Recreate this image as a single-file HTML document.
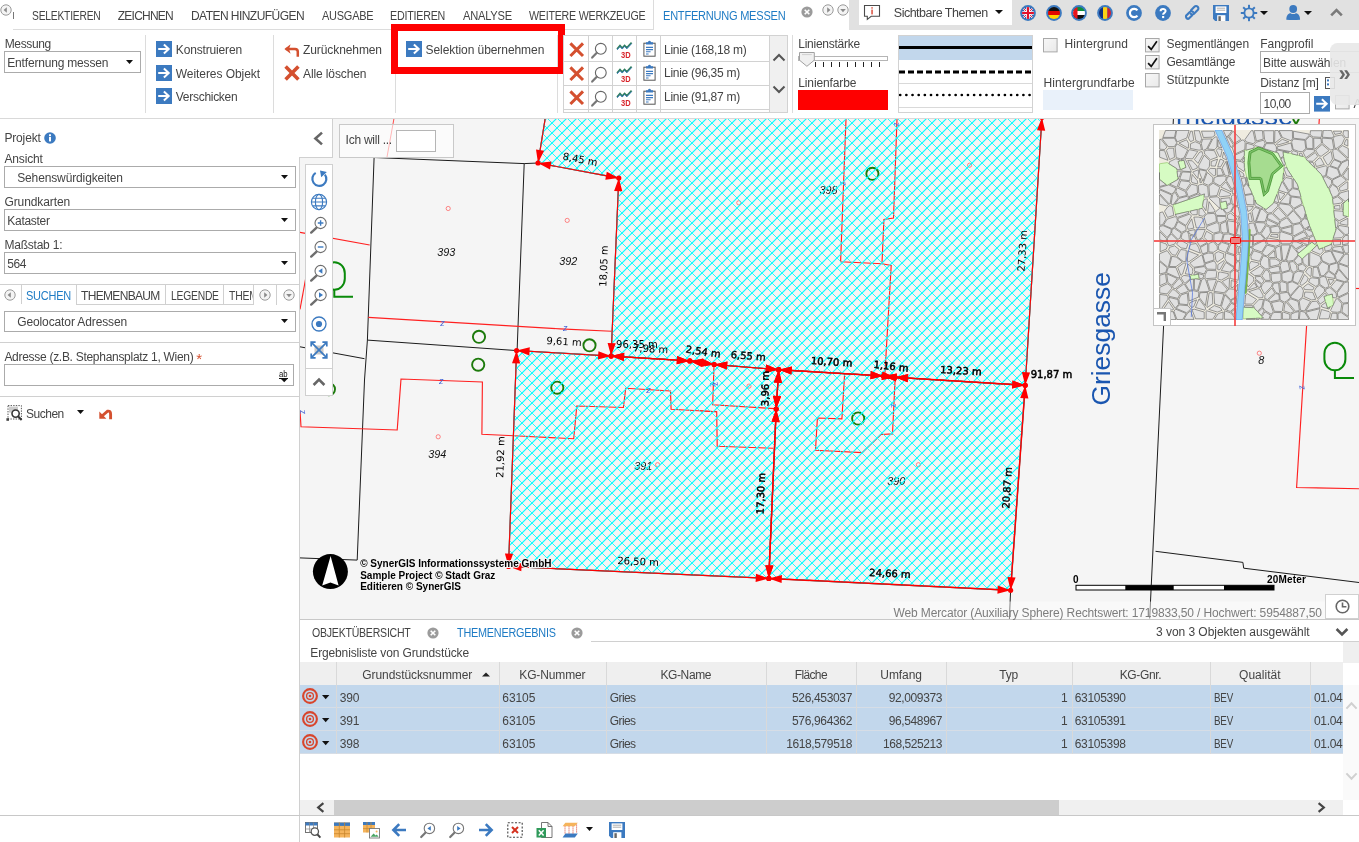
<!DOCTYPE html>
<html lang="de"><head><meta charset="utf-8"><title>WebOffice - Entfernung messen</title><style>
html,body{margin:0;padding:0;}
body{width:1359px;height:842px;overflow:hidden;background:#fff;position:relative;font-family:"Liberation Sans",sans-serif;}
.a{position:absolute;box-sizing:border-box;}
.t{white-space:nowrap;}
#root{position:absolute;left:0;top:0;width:1359px;height:842px;will-change:transform;}
svg{overflow:visible;}
</style></head><body><div id="root">
<div class="a" style="left:849px;top:0px;width:510px;height:30px;background:#e1e1e1;"></div>
<div class="a" style="left:859px;top:0px;width:153px;height:25px;background:#fff;"></div>
<div class="a" style="left:13px;top:29px;width:836px;height:1px;background:#dcdcdc;"></div>
<div class="a" style="left:653px;top:0px;width:1px;height:30px;background:#dcdcdc;"></div>
<div class="a" style="left:654px;top:29px;width:195px;height:1px;background:#fff;"></div>
<svg class="a" style="left:0.2999999999999998px;top:4.199999999999999px;" width="12" height="12" viewBox="0 0 12 12"><circle cx="6" cy="6" r="5.2" fill="#f4f4f4" stroke="#9a9a9a" stroke-width="1"/><path d="M6.8 3.2V8.8L3.6 6Z" fill="#8a8a8a"/></svg>
<div class="a" style="left:13px;top:12px;width:1px;height:7px;background:#777;"></div>
<span id="t0" class="a t" style="left:31.8px;top:6.34px;font:400 12px/20px 'Liberation Sans', sans-serif;color:#444;letter-spacing:-0.250px;transform:scaleX(0.8567);transform-origin:0 50%;">SELEKTIEREN</span>
<span id="t1" class="a t" style="left:117.8px;top:6.34px;font:400 12px/20px 'Liberation Sans', sans-serif;color:#444;letter-spacing:-0.779px;">ZEICHNEN</span>
<span id="t2" class="a t" style="left:191px;top:6.34px;font:400 12px/20px 'Liberation Sans', sans-serif;color:#444;letter-spacing:-0.547px;">DATEN HINZUFÜGEN</span>
<span id="t3" class="a t" style="left:321.5px;top:6.34px;font:400 12px/20px 'Liberation Sans', sans-serif;color:#444;letter-spacing:-0.250px;transform:scaleX(0.9130);transform-origin:0 50%;">AUSGABE</span>
<span id="t4" class="a t" style="left:390.3px;top:6.34px;font:400 12px/20px 'Liberation Sans', sans-serif;color:#444;letter-spacing:-0.250px;transform:scaleX(0.8919);transform-origin:0 50%;">EDITIEREN</span>
<span id="t5" class="a t" style="left:462.5px;top:6.34px;font:400 12px/20px 'Liberation Sans', sans-serif;color:#444;letter-spacing:-0.250px;transform:scaleX(0.9273);transform-origin:0 50%;">ANALYSE</span>
<span id="t6" class="a t" style="left:528.5px;top:6.34px;font:400 12px/20px 'Liberation Sans', sans-serif;color:#444;letter-spacing:-0.250px;transform:scaleX(0.8878);transform-origin:0 50%;">WEITERE WERKZEUGE</span>
<span id="t7" class="a t" style="left:663px;top:6.34px;font:400 12px/20px 'Liberation Sans', sans-serif;color:#1e7bc4;letter-spacing:-0.250px;transform:scaleX(0.9195);transform-origin:0 50%;">ENTFERNUNG MESSEN</span>
<svg class="a" style="left:800.8px;top:6px;" width="12" height="12" viewBox="0 0 12 12"><circle cx="6" cy="6" r="5.6" fill="#9b9b9b"/><path d="M3.7 3.7L8.3 8.3M8.3 3.7L3.7 8.3" stroke="#fff" stroke-width="1.6"/></svg>
<svg class="a" style="left:821.8px;top:4.199999999999999px;" width="12" height="12" viewBox="0 0 12 12"><circle cx="6" cy="6" r="5.2" fill="#f4f4f4" stroke="#9a9a9a" stroke-width="1"/><path d="M5.2 3.2V8.8L8.4 6Z" fill="#8a8a8a"/></svg>
<svg class="a" style="left:836.8px;top:4.199999999999999px;" width="12" height="12" viewBox="0 0 12 12"><circle cx="6" cy="6" r="5.2" fill="#f4f4f4" stroke="#9a9a9a" stroke-width="1"/><path d="M3.2 5H8.8L6 8.2Z" fill="#8a8a8a"/></svg>
<svg class="a" style="left:863px;top:4px;" width="18" height="17" viewBox="0 0 18 17"><path d="M1.5 1.5H16.5V12.3H8.2L4.3 15.4V12.3H1.5Z" fill="#fff" stroke="#4a4a4a" stroke-width="1.1"/><rect x="8.4" y="3.2" width="1.3" height="1.4" fill="#d4321f"/><rect x="8.4" y="5.6" width="1.3" height="4.8" fill="#d4321f"/></svg>
<span id="t8" class="a t" style="left:893.8px;top:2.87px;font:400 12.5px/20px 'Liberation Sans', sans-serif;color:#444;letter-spacing:-0.498px;">Sichtbare Themen</span>
<svg class="a" style="left:995.3px;top:10.0px;" width="8" height="4" viewBox="0 0 8 4"><path d="M0 0H8L4.0 4Z" fill="#111"/></svg>
<svg class="a" style="left:1019.9000000000001px;top:4.800000000000001px;" width="16" height="16" viewBox="0 0 16 16"><defs><clipPath id="fc1027"><circle cx="8" cy="8" r="6"/></clipPath></defs><circle cx="8" cy="8" r="7.9" fill="#3c7ac0"/><g clip-path="url(#fc1027)"><rect width="16" height="16" fill="#2a3f8f"/><path d="M0 0L16 16M16 0L0 16" stroke="#fff" stroke-width="2.2"/><path d="M0 0L16 16M16 0L0 16" stroke="#e3122c" stroke-width="0.9"/><path d="M8 0V16M0 8H16" stroke="#fff" stroke-width="3.6"/><path d="M8 0V16M0 8H16" stroke="#e3122c" stroke-width="2.1"/></g></svg>
<svg class="a" style="left:1045.7px;top:4.800000000000001px;" width="16" height="16" viewBox="0 0 16 16"><defs><clipPath id="fc1053"><circle cx="8" cy="8" r="6"/></clipPath></defs><circle cx="8" cy="8" r="7.9" fill="#3c7ac0"/><g clip-path="url(#fc1053)"><rect width="16" height="6" fill="#111"/><rect y="6" width="16" height="4" fill="#e10600"/><rect y="10" width="16" height="6" fill="#ffd200"/></g></svg>
<svg class="a" style="left:1070.9px;top:4.800000000000001px;" width="16" height="16" viewBox="0 0 16 16"><defs><clipPath id="fc1078"><circle cx="8" cy="8" r="6"/></clipPath></defs><circle cx="8" cy="8" r="7.9" fill="#3c7ac0"/><g clip-path="url(#fc1078)"><rect width="16" height="6" fill="#0a8f3c"/><rect y="6" width="16" height="4" fill="#fff"/><rect y="10" width="16" height="6" fill="#111"/><rect width="6.5" height="16" fill="#e8141c"/></g></svg>
<svg class="a" style="left:1096.7px;top:4.800000000000001px;" width="16" height="16" viewBox="0 0 16 16"><defs><clipPath id="fc1104"><circle cx="8" cy="8" r="6"/></clipPath></defs><circle cx="8" cy="8" r="7.9" fill="#3c7ac0"/><g clip-path="url(#fc1104)"><rect width="6" height="16" fill="#12307e"/><rect x="6" width="4.4" height="16" fill="#fcd116"/><rect x="10.4" width="6" height="16" fill="#d3202f"/></g></svg>
<svg class="a" style="left:1125.8px;top:4.800000000000001px;" width="16" height="16" viewBox="0 0 16 16"><circle cx="8" cy="8" r="7.9" fill="#3c7ac0"/><path d="M11.4 5.4A4.2 4.2 0 1 0 11.4 10.6" fill="none" stroke="#fff" stroke-width="2.2"/></svg>
<svg class="a" style="left:1155px;top:4.800000000000001px;" width="16" height="16" viewBox="0 0 16 16"><circle cx="8" cy="8" r="7.9" fill="#3c7ac0"/><path d="M5.6 6.2C5.6 3.2 10.6 3.2 10.6 6.1C10.6 7.9 8.1 7.9 8.1 9.8" fill="none" stroke="#fff" stroke-width="2"/><rect x="7.1" y="11" width="2.1" height="2.1" fill="#fff"/></svg>
<svg class="a" style="left:1184px;top:5px;" width="16" height="16" viewBox="0 0 16 16"><g fill="none" stroke="#3c7ac0" stroke-width="2.1" stroke-linecap="round"><path d="M6.8 9.2L3.4 12.6A2.3 2.3 0 0 1 0.9 9.5L4.6 5.8A2.3 2.3 0 0 1 7.9 5.8" transform="translate(1.2 1.2)"/><path d="M7.2 4.8L10.6 1.4A2.3 2.3 0 0 1 13.9 4.7L10.2 8.4A2.3 2.3 0 0 1 6.9 8.4" transform="translate(-0.2 0.4)"/></g></svg>
<svg class="a" style="left:1212.8px;top:5px;" width="16" height="16" viewBox="0 0 16 16"><path d="M0 0H16V16H2.2L0 13.8Z" fill="#3c7ac0"/><rect x="2.6" y="1.4" width="10.8" height="6.6" fill="#fff"/><path d="M3.8 3.2H12.2M3.8 5.2H12.2" stroke="#999" stroke-width="0.8"/><rect x="4.2" y="10.2" width="8.2" height="5.8" fill="#fff"/><rect x="5.4" y="11.2" width="2.4" height="4.8" fill="#666"/></svg>
<svg class="a" style="left:1240.9px;top:4.800000000000001px;" width="16" height="16" viewBox="0 0 16 16"><rect x="7" y="-0.2" width="2" height="3.4" fill="#3c7ac0" transform="rotate(0 8 8)"/><rect x="7" y="-0.2" width="2" height="3.4" fill="#3c7ac0" transform="rotate(45 8 8)"/><rect x="7" y="-0.2" width="2" height="3.4" fill="#3c7ac0" transform="rotate(90 8 8)"/><rect x="7" y="-0.2" width="2" height="3.4" fill="#3c7ac0" transform="rotate(135 8 8)"/><rect x="7" y="-0.2" width="2" height="3.4" fill="#3c7ac0" transform="rotate(180 8 8)"/><rect x="7" y="-0.2" width="2" height="3.4" fill="#3c7ac0" transform="rotate(225 8 8)"/><rect x="7" y="-0.2" width="2" height="3.4" fill="#3c7ac0" transform="rotate(270 8 8)"/><rect x="7" y="-0.2" width="2" height="3.4" fill="#3c7ac0" transform="rotate(315 8 8)"/><circle cx="8" cy="8" r="4.6" fill="#e1e1e1" stroke="#3c7ac0" stroke-width="1.9"/></svg>
<svg class="a" style="left:1260.4px;top:10.8px;" width="8" height="4" viewBox="0 0 8 4"><path d="M0 0H8L4.0 4Z" fill="#111"/></svg>
<svg class="a" style="left:1286px;top:5px;" width="14.4" height="15" viewBox="0 0 14.4 15"><circle cx="7.2" cy="4" r="3.9" fill="#3c7ac0"/><path d="M0.3 14.8C0.3 9.6 3 8.2 4.6 8.2C6 9.4 8.4 9.4 9.8 8.2C11.4 8.2 14.1 9.6 14.1 14.8C10 15.2 4.4 15.2 0.3 14.8Z" fill="#3c7ac0"/></svg>
<svg class="a" style="left:1304.4px;top:10.8px;" width="8" height="4" viewBox="0 0 8 4"><path d="M0 0H8L4.0 4Z" fill="#111"/></svg>
<svg class="a" style="left:1330px;top:8px;" width="13" height="9" viewBox="0 0 13 9"><path d="M1.2 7.4L6.5 2L11.8 7.4" fill="none" stroke="#7a7a7a" stroke-width="2.6"/></svg>
<div class="a" style="left:0px;top:118px;width:1359px;height:1px;background:#d9d9d9;"></div>
<span id="t9" class="a t" style="left:4.7px;top:34.24px;font:400 12px/20px 'Liberation Sans', sans-serif;color:#444;letter-spacing:-0.354px;">Messung</span>
<div class="a" style="left:4px;top:51px;width:137px;height:22px;background:#fff;border:1px solid #ababab;"></div>
<span id="t10" class="a t" style="left:7.3px;top:53.14px;font:400 12px/20px 'Liberation Sans', sans-serif;color:#444;letter-spacing:-0.186px;">Entfernung messen</span>
<svg class="a" style="left:126.0px;top:60.0px;" width="7" height="4" viewBox="0 0 7 4"><path d="M0 0H7L3.5 4Z" fill="#111"/></svg>
<div class="a" style="left:145px;top:35px;width:1px;height:78px;background:#dcdcdc;"></div>
<svg class="a" style="left:156px;top:41px;" width="16" height="16" viewBox="0 0 16 16"><rect width="16" height="16" fill="#3c7ac0"/><path d="M2.2 8H12.4M7.9 3.5L12.7 8L7.9 12.5" fill="none" stroke="#fff" stroke-width="2"/></svg>
<span id="t11" class="a t" style="left:175.8px;top:40.14px;font:400 12px/20px 'Liberation Sans', sans-serif;color:#444;letter-spacing:-0.161px;">Konstruieren</span>
<svg class="a" style="left:156px;top:65px;" width="16" height="16" viewBox="0 0 16 16"><rect width="16" height="16" fill="#3c7ac0"/><path d="M2.2 8H12.4M7.9 3.5L12.7 8L7.9 12.5" fill="none" stroke="#fff" stroke-width="2"/></svg>
<span id="t12" class="a t" style="left:175.8px;top:63.54px;font:400 12px/20px 'Liberation Sans', sans-serif;color:#444;letter-spacing:-0.066px;">Weiteres Objekt</span>
<svg class="a" style="left:156px;top:88px;" width="16" height="16" viewBox="0 0 16 16"><rect width="16" height="16" fill="#3c7ac0"/><path d="M2.2 8H12.4M7.9 3.5L12.7 8L7.9 12.5" fill="none" stroke="#fff" stroke-width="2"/></svg>
<span id="t13" class="a t" style="left:175.8px;top:87.04px;font:400 12px/20px 'Liberation Sans', sans-serif;color:#444;letter-spacing:-0.286px;">Verschicken</span>
<div class="a" style="left:273px;top:35px;width:1px;height:78px;background:#dcdcdc;"></div>
<svg class="a" style="left:283.5px;top:43.5px;" width="16" height="14" viewBox="0 0 16 14"><path d="M1.8 5H11Q13.8 5 13.8 7.8V12.8" fill="none" stroke="#d4502f" stroke-width="2.5"/><path d="M6.6 0.2L0.4 5L6.6 9.8L5 5Z" fill="#d4502f"/></svg>
<span id="t14" class="a t" style="left:303px;top:40.14px;font:400 12px/20px 'Liberation Sans', sans-serif;color:#444;letter-spacing:-0.091px;">Zurücknehmen</span>
<svg class="a" style="left:283.5px;top:65.3px;" width="16" height="16" viewBox="0 0 16 16"><path d="M1.6 1.6L14.4 14.4M14.4 1.6L1.6 14.4" fill="none" stroke="#d4502f" stroke-width="3.6"/></svg>
<span id="t15" class="a t" style="left:303px;top:63.54px;font:400 12px/20px 'Liberation Sans', sans-serif;color:#444;letter-spacing:-0.106px;">Alle löschen</span>
<div class="a" style="left:395px;top:35px;width:1px;height:78px;background:#dcdcdc;"></div>
<div class="a" style="left:557px;top:35px;width:1px;height:78px;background:#dcdcdc;"></div>
<svg class="a" style="left:406px;top:41px;" width="16" height="16" viewBox="0 0 16 16"><rect width="16" height="16" fill="#3c7ac0"/><path d="M2.2 8H12.4M7.9 3.5L12.7 8L7.9 12.5" fill="none" stroke="#fff" stroke-width="2"/></svg>
<span id="t16" class="a t" style="left:425.5px;top:40.14px;font:400 12px/20px 'Liberation Sans', sans-serif;color:#444;letter-spacing:-0.066px;">Selektion übernehmen</span>
<div class="a" style="left:391px;top:24px;width:174px;height:50px;border:7px solid #fe0000;"></div>
<div class="a" style="left:563px;top:35px;width:225px;height:78px;background:#fff;border:1px solid #d2d2d2;"></div>
<div class="a" style="left:770px;top:36px;width:17px;height:76px;background:#f0f0f0;"></div>
<div class="a" style="left:588px;top:36px;width:1px;height:76px;background:#d2d2d2;"></div>
<div class="a" style="left:612px;top:36px;width:1px;height:76px;background:#d2d2d2;"></div>
<div class="a" style="left:636px;top:36px;width:1px;height:76px;background:#d2d2d2;"></div>
<div class="a" style="left:660px;top:36px;width:1px;height:76px;background:#d2d2d2;"></div>
<div class="a" style="left:769px;top:36px;width:1px;height:76px;background:#d2d2d2;"></div>
<div class="a" style="left:564px;top:61px;width:206px;height:1px;background:#d2d2d2;"></div>
<div class="a" style="left:564px;top:85px;width:206px;height:1px;background:#d2d2d2;"></div>
<div class="a" style="left:564px;top:109px;width:206px;height:1px;background:#d2d2d2;"></div>
<svg class="a" style="left:771.5px;top:53px;" width="14" height="9" viewBox="0 0 14 9"><path d="M1.5 7.5L7 2L12.5 7.5" fill="none" stroke="#555" stroke-width="2"/></svg>
<svg class="a" style="left:771.5px;top:85px;" width="14" height="9" viewBox="0 0 14 9"><path d="M1.5 1.5L7 7L12.5 1.5" fill="none" stroke="#555" stroke-width="2"/></svg>
<svg class="a" style="left:568.5px;top:42px;" width="15.4" height="15.4" viewBox="0 0 15.4 15.4"><path d="M1.4 1.4L14 14M14 1.4L1.4 14" fill="none" stroke="#d4502f" stroke-width="3"/></svg>
<svg class="a" style="left:591px;top:41.5px;" width="17" height="17" viewBox="0 0 17 17"><circle cx="9.8" cy="6.8" r="5.4" fill="#fff" stroke="#666" stroke-width="1.1"/><path d="M5.8 10.8L1.2 15.6" stroke="#777" stroke-width="2.2" stroke-linecap="round"/></svg>
<svg class="a" style="left:615.5px;top:41px;" width="18" height="18" viewBox="0 0 18 18"><path d="M1 8L4 4.6L6.2 7L8.6 4.4L10.8 6.8L15.6 1.6" fill="none" stroke="#2e7d5b" stroke-width="1.7"/><path d="M1 9L4 5.6L6.2 8L8.6 5.4L10.8 7.8L15.6 2.6" fill="none" stroke="#3c7ac0" stroke-width="0.9"/><text x="5" y="17" font-family="Liberation Sans, sans-serif" font-size="9" font-weight="700" fill="#d8232a" textLength="9.6" lengthAdjust="spacingAndGlyphs">3D</text></svg>
<svg class="a" style="left:643px;top:39.5px;" width="13" height="17" viewBox="0 0 13 17"><rect x="0.9" y="3.2" width="11.2" height="13" fill="#fff" stroke="#555" stroke-width="1"/><path d="M3 3.4V2.2H4.8Q6.5 -0.6 8.2 2.2H10V4.6H3Z" fill="#3c7ac0"/><path d="M3 7.4H10M3 9.6H10M3 11.8H7.6M3 14H5.6" stroke="#3c7ac0" stroke-width="1.1"/></svg>
<span id="t17" class="a t" style="left:664px;top:39.54px;font:400 12px/20px 'Liberation Sans', sans-serif;color:#444;letter-spacing:-0.272px;">Linie (168,18 m)</span>
<svg class="a" style="left:568.5px;top:66px;" width="15.4" height="15.4" viewBox="0 0 15.4 15.4"><path d="M1.4 1.4L14 14M14 1.4L1.4 14" fill="none" stroke="#d4502f" stroke-width="3"/></svg>
<svg class="a" style="left:591px;top:65.5px;" width="17" height="17" viewBox="0 0 17 17"><circle cx="9.8" cy="6.8" r="5.4" fill="#fff" stroke="#666" stroke-width="1.1"/><path d="M5.8 10.8L1.2 15.6" stroke="#777" stroke-width="2.2" stroke-linecap="round"/></svg>
<svg class="a" style="left:615.5px;top:65px;" width="18" height="18" viewBox="0 0 18 18"><path d="M1 8L4 4.6L6.2 7L8.6 4.4L10.8 6.8L15.6 1.6" fill="none" stroke="#2e7d5b" stroke-width="1.7"/><path d="M1 9L4 5.6L6.2 8L8.6 5.4L10.8 7.8L15.6 2.6" fill="none" stroke="#3c7ac0" stroke-width="0.9"/><text x="5" y="17" font-family="Liberation Sans, sans-serif" font-size="9" font-weight="700" fill="#d8232a" textLength="9.6" lengthAdjust="spacingAndGlyphs">3D</text></svg>
<svg class="a" style="left:643px;top:63.5px;" width="13" height="17" viewBox="0 0 13 17"><rect x="0.9" y="3.2" width="11.2" height="13" fill="#fff" stroke="#555" stroke-width="1"/><path d="M3 3.4V2.2H4.8Q6.5 -0.6 8.2 2.2H10V4.6H3Z" fill="#3c7ac0"/><path d="M3 7.4H10M3 9.6H10M3 11.8H7.6M3 14H5.6" stroke="#3c7ac0" stroke-width="1.1"/></svg>
<span id="t18" class="a t" style="left:664px;top:63.44px;font:400 12px/20px 'Liberation Sans', sans-serif;color:#444;letter-spacing:-0.279px;">Linie (96,35 m)</span>
<svg class="a" style="left:568.5px;top:90px;" width="15.4" height="15.4" viewBox="0 0 15.4 15.4"><path d="M1.4 1.4L14 14M14 1.4L1.4 14" fill="none" stroke="#d4502f" stroke-width="3"/></svg>
<svg class="a" style="left:591px;top:89.5px;" width="17" height="17" viewBox="0 0 17 17"><circle cx="9.8" cy="6.8" r="5.4" fill="#fff" stroke="#666" stroke-width="1.1"/><path d="M5.8 10.8L1.2 15.6" stroke="#777" stroke-width="2.2" stroke-linecap="round"/></svg>
<svg class="a" style="left:615.5px;top:89px;" width="18" height="18" viewBox="0 0 18 18"><path d="M1 8L4 4.6L6.2 7L8.6 4.4L10.8 6.8L15.6 1.6" fill="none" stroke="#2e7d5b" stroke-width="1.7"/><path d="M1 9L4 5.6L6.2 8L8.6 5.4L10.8 7.8L15.6 2.6" fill="none" stroke="#3c7ac0" stroke-width="0.9"/><text x="5" y="17" font-family="Liberation Sans, sans-serif" font-size="9" font-weight="700" fill="#d8232a" textLength="9.6" lengthAdjust="spacingAndGlyphs">3D</text></svg>
<svg class="a" style="left:643px;top:87.5px;" width="13" height="17" viewBox="0 0 13 17"><rect x="0.9" y="3.2" width="11.2" height="13" fill="#fff" stroke="#555" stroke-width="1"/><path d="M3 3.4V2.2H4.8Q6.5 -0.6 8.2 2.2H10V4.6H3Z" fill="#3c7ac0"/><path d="M3 7.4H10M3 9.6H10M3 11.8H7.6M3 14H5.6" stroke="#3c7ac0" stroke-width="1.1"/></svg>
<span id="t19" class="a t" style="left:664px;top:87.34px;font:400 12px/20px 'Liberation Sans', sans-serif;color:#444;letter-spacing:-0.279px;">Linie (91,87 m)</span>
<div class="a" style="left:792px;top:35px;width:1px;height:78px;background:#dcdcdc;"></div>
<span id="t20" class="a t" style="left:798.3px;top:33.84px;font:400 12px/20px 'Liberation Sans', sans-serif;color:#444;letter-spacing:-0.262px;">Linienstärke</span>
<div class="a" style="left:798px;top:56px;width:90px;height:5.4px;background:#fff;border:1px solid #b5b5b5;"></div>
<svg class="a" style="left:799px;top:52.4px;" width="16" height="15" viewBox="0 0 16 15"><path d="M0.5 0.5H15.3V8.2L7.9 14.3L0.5 8.2Z" fill="#f0f0f0" stroke="#a0a0a0" stroke-width="1"/><path d="M3 2.6H12.8" stroke="#d0d0d0" stroke-width="1"/></svg>
<div class="a" style="left:815px;top:62px;width:1px;height:5px;background:#222;"></div>
<div class="a" style="left:823px;top:62px;width:1px;height:5px;background:#222;"></div>
<div class="a" style="left:831px;top:62px;width:1px;height:5px;background:#222;"></div>
<div class="a" style="left:839px;top:62px;width:1px;height:5px;background:#222;"></div>
<div class="a" style="left:847px;top:62px;width:1px;height:5px;background:#222;"></div>
<div class="a" style="left:855px;top:62px;width:1px;height:5px;background:#222;"></div>
<div class="a" style="left:863px;top:62px;width:1px;height:5px;background:#222;"></div>
<div class="a" style="left:871px;top:62px;width:1px;height:5px;background:#222;"></div>
<div class="a" style="left:879px;top:62px;width:1px;height:5px;background:#222;"></div>
<span id="t21" class="a t" style="left:798.3px;top:73.04px;font:400 12px/20px 'Liberation Sans', sans-serif;color:#444;letter-spacing:-0.132px;">Linienfarbe</span>
<div class="a" style="left:798px;top:90px;width:90px;height:20px;background:#fe0000;"></div>
<div class="a" style="left:898px;top:35px;width:135px;height:78px;background:#fff;border:1px solid #d2d2d2;"></div>
<div class="a" style="left:899px;top:36px;width:133px;height:24px;background:#c2d7ec;"></div>
<div class="a" style="left:899px;top:45.8px;width:133px;height:3.5px;background:#000;"></div>
<div class="a" style="left:899px;top:83px;width:133px;height:1px;background:#d9d9d9;"></div>
<div class="a" style="left:899px;top:107px;width:133px;height:1px;background:#d9d9d9;"></div>
<svg class="a" style="left:899px;top:69.5px;" width="133" height="4" viewBox="0 0 133 4"><path d="M0 2H133" stroke="#000" stroke-width="3" stroke-dasharray="6 3"/></svg>
<svg class="a" style="left:899px;top:93.3px;" width="133" height="4" viewBox="0 0 133 4"><path d="M1.2 2H133" stroke="#000" stroke-width="2.7" stroke-dasharray="0.01 6.15" stroke-linecap="round"/></svg>
<svg class="a" style="left:1043px;top:37.5px;" width="14.6" height="14.4" viewBox="0 0 14.6 14.4"><defs><linearGradient id="cg1" x1="0" y1="0" x2="1" y2="1"><stop offset="0" stop-color="#f7f7f7"/><stop offset="1" stop-color="#e9e9e9"/></linearGradient></defs><rect x="0.5" y="0.5" width="13.6" height="13.4" fill="url(#cg1)" stroke="#a8a8a8"/></svg>
<span id="t22" class="a t" style="left:1064.5px;top:33.84px;font:400 12px/20px 'Liberation Sans', sans-serif;color:#444;letter-spacing:0.076px;">Hintergrund</span>
<span id="t23" class="a t" style="left:1043.5px;top:73.04px;font:400 12px/20px 'Liberation Sans', sans-serif;color:#444;letter-spacing:0.073px;">Hintergrundfarbe</span>
<div class="a" style="left:1043px;top:90px;width:90px;height:20px;background:#e9f1fa;"></div>
<svg class="a" style="left:1145px;top:37.5px;" width="14.6" height="14.4" viewBox="0 0 14.6 14.4"><defs><linearGradient id="cg2" x1="0" y1="0" x2="1" y2="1"><stop offset="0" stop-color="#f7f7f7"/><stop offset="1" stop-color="#e9e9e9"/></linearGradient></defs><rect x="0.5" y="0.5" width="13.6" height="13.4" fill="url(#cg2)" stroke="#a8a8a8"/><path d="M3.1 8.2L6.2 11.4L11.9 3.3" fill="none" stroke="#111" stroke-width="1.7"/></svg>
<svg class="a" style="left:1145px;top:55.3px;" width="14.6" height="14.4" viewBox="0 0 14.6 14.4"><defs><linearGradient id="cg3" x1="0" y1="0" x2="1" y2="1"><stop offset="0" stop-color="#f7f7f7"/><stop offset="1" stop-color="#e9e9e9"/></linearGradient></defs><rect x="0.5" y="0.5" width="13.6" height="13.4" fill="url(#cg3)" stroke="#a8a8a8"/><path d="M3.1 8.2L6.2 11.4L11.9 3.3" fill="none" stroke="#111" stroke-width="1.7"/></svg>
<svg class="a" style="left:1145px;top:73.2px;" width="14.6" height="14.4" viewBox="0 0 14.6 14.4"><defs><linearGradient id="cg4" x1="0" y1="0" x2="1" y2="1"><stop offset="0" stop-color="#f7f7f7"/><stop offset="1" stop-color="#e9e9e9"/></linearGradient></defs><rect x="0.5" y="0.5" width="13.6" height="13.4" fill="url(#cg4)" stroke="#a8a8a8"/></svg>
<span id="t24" class="a t" style="left:1166.5px;top:33.84px;font:400 12px/20px 'Liberation Sans', sans-serif;color:#444;letter-spacing:-0.126px;">Segmentlängen</span>
<span id="t25" class="a t" style="left:1166.5px;top:51.84px;font:400 12px/20px 'Liberation Sans', sans-serif;color:#444;letter-spacing:-0.245px;">Gesamtlänge</span>
<span id="t26" class="a t" style="left:1166.5px;top:70.04px;font:400 12px/20px 'Liberation Sans', sans-serif;color:#444;letter-spacing:-0.036px;">Stützpunkte</span>
<span id="t27" class="a t" style="left:1260.3px;top:33.84px;font:400 12px/20px 'Liberation Sans', sans-serif;color:#444;letter-spacing:-0.039px;">Fangprofil</span>
<div class="a" style="left:1260px;top:51.3px;width:110px;height:21.6px;background:#fff;border:1px solid #ababab;"></div>
<span id="t28" class="a t" style="left:1263.1px;top:53.14px;font:400 12px/20px 'Liberation Sans', sans-serif;color:#444;letter-spacing:-0.120px;">Bitte auswählen</span>
<span id="t29" class="a t" style="left:1260.3px;top:73.14px;font:400 12px/20px 'Liberation Sans', sans-serif;color:#444;letter-spacing:-0.144px;">Distanz [m]</span>
<svg class="a" style="left:1324.5px;top:77px;" width="8" height="12" viewBox="0 0 8 12"><rect x="0.5" y="0.5" width="9" height="11" fill="#fff" stroke="#555"/><rect x="2" y="2.4" width="2" height="2" fill="#3c7ac0"/><rect x="2" y="6.4" width="2" height="2" fill="#3c7ac0"/></svg>
<div class="a" style="left:1260px;top:92px;width:50px;height:21.8px;background:#fff;border:1px solid #ababab;"></div>
<span id="t30" class="a t" style="left:1263.6px;top:94.04px;font:400 12px/20px 'Liberation Sans', sans-serif;color:#444;letter-spacing:-0.629px;">10,00</span>
<svg class="a" style="left:1314px;top:96.3px;" width="16" height="15.6" viewBox="0 0 16 15.6"><rect width="16" height="15.6" fill="#3c7ac0"/><path d="M2.2 7.8H12.4M7.9 3.3L12.7 7.8L7.9 12.3" fill="none" stroke="#fff" stroke-width="2"/></svg>
<svg class="a" style="left:1335.3px;top:95.3px;" width="14.6" height="14.4" viewBox="0 0 14.6 14.4"><defs><linearGradient id="cg5" x1="0" y1="0" x2="1" y2="1"><stop offset="0" stop-color="#f7f7f7"/><stop offset="1" stop-color="#e9e9e9"/></linearGradient></defs><rect x="0.5" y="0.5" width="13.6" height="13.4" fill="url(#cg5)" stroke="#a8a8a8"/></svg>
<span id="t31" class="a t" style="left:1353.6px;top:93.84px;font:400 12px/20px 'Liberation Sans', sans-serif;color:#444;">A</span>
<div class="a" style="left:1330.3px;top:43.2px;width:40px;height:61.5px;background:rgba(232,232,232,0.9);border-radius:7.5px 0 0 7.5px;"></div>
<span id="t32" class="a t" style="left:1338.4px;top:63.68px;font:700 22px/20px 'Liberation Sans', sans-serif;color:#666;">»</span>
<div class="a" style="left:299px;top:157px;width:1px;height:685px;background:#d0d0d0;"></div>
<span id="t33" class="a t" style="left:4.4px;top:127.94px;font:400 12px/20px 'Liberation Sans', sans-serif;color:#444;letter-spacing:-0.148px;">Projekt</span>
<svg class="a" style="left:44px;top:131.5px;" width="12" height="12" viewBox="0 0 12 12"><circle cx="6" cy="6" r="5.8" fill="#3c7ac0"/><rect x="5" y="5" width="2" height="4.4" fill="#fff"/><rect x="5" y="2.3" width="2" height="1.9" fill="#fff"/></svg>
<span id="t34" class="a t" style="left:4.4px;top:149.14px;font:400 12px/20px 'Liberation Sans', sans-serif;color:#444;letter-spacing:-0.132px;">Ansicht</span>
<div class="a" style="left:4px;top:166px;width:292px;height:22px;background:#fff;border:1px solid #ababab;"></div>
<span id="t35" class="a t" style="left:17.2px;top:167.94px;font:400 12px/20px 'Liberation Sans', sans-serif;color:#444;letter-spacing:-0.130px;">Sehenswürdigkeiten</span>
<svg class="a" style="left:281.0px;top:175.3px;" width="7" height="4" viewBox="0 0 7 4"><path d="M0 0H7L3.5 4Z" fill="#111"/></svg>
<span id="t36" class="a t" style="left:4.4px;top:192.24px;font:400 12px/20px 'Liberation Sans', sans-serif;color:#444;letter-spacing:-0.086px;">Grundkarten</span>
<div class="a" style="left:4px;top:209px;width:292px;height:22px;background:#fff;border:1px solid #ababab;"></div>
<span id="t37" class="a t" style="left:7.3px;top:210.94px;font:400 12px/20px 'Liberation Sans', sans-serif;color:#444;letter-spacing:-0.294px;">Kataster</span>
<svg class="a" style="left:281.0px;top:218.3px;" width="7" height="4" viewBox="0 0 7 4"><path d="M0 0H7L3.5 4Z" fill="#111"/></svg>
<span id="t38" class="a t" style="left:4.4px;top:235.04px;font:400 12px/20px 'Liberation Sans', sans-serif;color:#444;letter-spacing:-0.214px;">Maßstab 1:</span>
<div class="a" style="left:4px;top:252px;width:292px;height:22px;background:#fff;border:1px solid #ababab;"></div>
<span id="t39" class="a t" style="left:7.3px;top:254.04px;font:400 12px/20px 'Liberation Sans', sans-serif;color:#444;letter-spacing:-0.492px;">564</span>
<svg class="a" style="left:281.0px;top:261.3px;" width="7" height="4" viewBox="0 0 7 4"><path d="M0 0H7L3.5 4Z" fill="#111"/></svg>
<div class="a" style="left:0px;top:284px;width:299px;height:1px;background:#d0d0d0;"></div>
<svg class="a" style="left:4.4px;top:289.3px;" width="12" height="12" viewBox="0 0 12 12"><circle cx="6" cy="6" r="5.2" fill="#f4f4f4" stroke="#9a9a9a" stroke-width="1"/><path d="M6.8 3.2V8.8L3.6 6Z" fill="#8a8a8a"/></svg>
<svg class="a" style="left:258.9px;top:289.3px;" width="12" height="12" viewBox="0 0 12 12"><circle cx="6" cy="6" r="5.2" fill="#f4f4f4" stroke="#9a9a9a" stroke-width="1"/><path d="M5.2 3.2V8.8L8.4 6Z" fill="#8a8a8a"/></svg>
<svg class="a" style="left:282.5px;top:289.3px;" width="12" height="12" viewBox="0 0 12 12"><circle cx="6" cy="6" r="5.2" fill="#f4f4f4" stroke="#9a9a9a" stroke-width="1"/><path d="M3.2 5H8.8L6 8.2Z" fill="#8a8a8a"/></svg>
<div class="a" style="left:21px;top:284px;width:1px;height:20px;background:#d0d0d0;"></div>
<div class="a" style="left:76px;top:304px;width:178px;height:1px;background:#d0d0d0;"></div>
<div class="a" style="left:76px;top:285px;width:1px;height:19px;background:#d0d0d0;"></div>
<div class="a" style="left:165px;top:285px;width:1px;height:19px;background:#d0d0d0;"></div>
<div class="a" style="left:223px;top:285px;width:1px;height:19px;background:#d0d0d0;"></div>
<div class="a" style="left:253px;top:285px;width:1px;height:19px;background:#d0d0d0;"></div>
<div class="a" style="left:276px;top:285px;width:1px;height:20px;background:#d0d0d0;"></div>
<span id="t40" class="a t" style="left:26px;top:286.34px;font:400 12px/20px 'Liberation Sans', sans-serif;color:#1e7bc4;letter-spacing:-0.250px;transform:scaleX(0.9149);transform-origin:0 50%;">SUCHEN</span>
<span id="t41" class="a t" style="left:81px;top:286.34px;font:400 12px/20px 'Liberation Sans', sans-serif;color:#444;letter-spacing:-0.668px;">THEMENBAUM</span>
<span id="t42" class="a t" style="left:170.6px;top:286.34px;font:400 12px/20px 'Liberation Sans', sans-serif;color:#444;letter-spacing:-0.250px;transform:scaleX(0.8594);transform-origin:0 50%;">LEGENDE</span>
<span id="t43" class="a t" style="left:229px;top:286.34px;font:400 12px/20px 'Liberation Sans', sans-serif;color:#444;letter-spacing:-0.250px;transform:scaleX(0.8691);transform-origin:0 50%;width:27.16px;overflow:hidden;">THEMENERGEBNIS</span>
<div class="a" style="left:4px;top:310.5px;width:292px;height:21px;background:#fff;border:1px solid #ababab;"></div>
<span id="t44" class="a t" style="left:17.2px;top:312.14px;font:400 12px/20px 'Liberation Sans', sans-serif;color:#444;letter-spacing:-0.112px;">Geolocator Adressen</span>
<svg class="a" style="left:281.0px;top:319.3px;" width="7" height="4" viewBox="0 0 7 4"><path d="M0 0H7L3.5 4Z" fill="#111"/></svg>
<div class="a" style="left:0px;top:342px;width:299px;height:1px;background:#d0d0d0;"></div>
<span id="t45" class="a t" style="left:4.4px;top:347.04px;font:400 12px/20px 'Liberation Sans', sans-serif;color:#444;letter-spacing:-0.288px;">Adresse (z.B. Stephansplatz 1, Wien)</span>
<span id="t46" class="a t" style="left:196.3px;top:348.80px;font:400 15px/20px 'Liberation Sans', sans-serif;color:#d4502f;">*</span>
<div class="a" style="left:4px;top:364px;width:290px;height:22px;background:#fff;border:1px solid #ababab;"></div>
<span id="t47" class="a t" style="left:279.3px;top:363.98px;font:400 9px/20px 'Liberation Sans', sans-serif;color:#111;transform:scaleX(0.8587);transform-origin:0 50%;">ab</span>
<div class="a" style="left:279.3px;top:377.6px;width:8.8px;height:1px;background:#111;"></div>
<svg class="a" style="left:280.5px;top:379.2px;" width="6.4" height="3.2" viewBox="0 0 6.4 3.2"><path d="M0 0H6.4L3.2 3.2Z" fill="#111"/></svg>
<div class="a" style="left:0px;top:396px;width:299px;height:1px;background:#d0d0d0;"></div>
<svg class="a" style="left:6px;top:405px;" width="17" height="17" viewBox="0 0 17 17"><rect x="2" y="0.6" width="13.4" height="13.4" fill="none" stroke="#444" stroke-width="0.9" stroke-dasharray="1.4 1.2"/><rect x="3" y="1.6" width="9" height="6" fill="#ccc"/><circle cx="9.6" cy="8.6" r="3.6" fill="#fff" stroke="#333" stroke-width="1.6"/><path d="M12.2 11.4L15.6 15" stroke="#333" stroke-width="2"/><rect x="0.4" y="13.2" width="2.6" height="2.6" fill="#444"/></svg>
<span id="t48" class="a t" style="left:26px;top:404.34px;font:400 12px/20px 'Liberation Sans', sans-serif;color:#444;letter-spacing:-0.491px;">Suchen</span>
<svg class="a" style="left:77.1px;top:410.0px;" width="7" height="4" viewBox="0 0 7 4"><path d="M0 0H7L3.5 4Z" fill="#111"/></svg>
<svg class="a" style="left:98.7px;top:408.6px;" width="14" height="10.4" viewBox="0 0 14 10.4"><path d="M11.6 10.2V5.2Q11.6 1.6 8.6 2.2L3 7" fill="none" stroke="#d4502f" stroke-width="2.9"/><path d="M0.3 2.4V9.8H7.4Z" fill="#d4502f"/></svg>
<svg class="a" style="left:300px;top:119px;overflow:hidden" width="1059" height="500" viewBox="300 119 1059 500"><defs><pattern id="hx" width="10" height="10" patternUnits="userSpaceOnUse" x="2" y="3"><path d="M-1 -1L11 11" stroke="#00ffff" stroke-width="0.85" fill="none"/><path d="M11 -1L-1 11" stroke="#00ffff" stroke-width="1.2" fill="none"/></pattern></defs><rect x="300" y="119" width="1059" height="500" fill="#f5f5f5"/><text x="1293" y="124.6" text-anchor="end" font-family="Liberation Sans, sans-serif" font-size="27" fill="#1a56b0">rheigasse</text><path d="M1293 119L1296 124L1299 119" stroke="#1d7a0c" stroke-width="2" fill="none"/><polyline points="374.1,157.5 524.2,163.6 538.0,163.0" fill="none" stroke="#1c1c1c" stroke-width="1" /><polyline points="374.1,157.5 367.4,340.1 364.5,380.0 357.2,560.0" fill="none" stroke="#1c1c1c" stroke-width="1" /><polyline points="524.2,163.6 517.1,350.7" fill="none" stroke="#1c1c1c" stroke-width="1" /><polyline points="367.4,340.1 517.0,350.6" fill="none" stroke="#1c1c1c" stroke-width="1" /><polyline points="300.0,346.8 364.5,358.7" fill="none" stroke="#1c1c1c" stroke-width="1" /><polyline points="300.0,557.9 357.2,560.1" fill="none" stroke="#1c1c1c" stroke-width="1" /><polyline points="1173.4,119.0 1163.6,325.5 1149.7,618.5" fill="none" stroke="#1c1c1c" stroke-width="1" /><polyline points="1010.6,590.3 1009.4,619.0" fill="none" stroke="#1c1c1c" stroke-width="1" /><polyline points="1155.5,551.3 1242.9,562.4 1243.7,568.2 1359.0,582.5" fill="none" stroke="#1c1c1c" stroke-width="1" /><polyline points="548.2,100.0 538.0,163.0 618.8,178.1 611.1,356.1 689.8,360.9 714.2,364.5 778.7,369.7 883.5,376.0 895.0,377.3 1025.2,385.3 1041.9,117.5 1042.9,100.0 548.2,100.0" fill="none" stroke="#333" stroke-width="1.2" /><polyline points="516.6,350.5 611.1,356.1 689.8,360.9 714.2,364.5 778.7,369.7 776.2,409.0 768.8,578.4 508.5,566.5 516.6,350.5" fill="none" stroke="#333" stroke-width="1.2" /><polyline points="778.7,369.7 883.5,376.0 895.0,377.3 1025.2,385.3 1010.6,590.3 768.8,578.4 776.2,409.0 778.7,369.7" fill="none" stroke="#333" stroke-width="1.2" /><polyline points="393.9,119.0 387.0,157.0" fill="none" stroke="#ff2020" stroke-width="0.8" /><polyline points="300.0,232.4 369.7,245.0" fill="none" stroke="#ff2020" stroke-width="1.15" /><polyline points="310.0,255.0 300.0,309.3" fill="none" stroke="#ff2020" stroke-width="1.15" /><polyline points="368.3,317.4 560.0,328.9 611.6,331.2" fill="none" stroke="#ff2020" stroke-width="1.15" /><polyline points="300.0,410.8 301.0,426.8 397.2,430.0 401.0,379.0 482.4,382.0 481.9,434.3 513.7,435.8 573.7,438.7 576.8,406.0 623.4,407.5 625.7,388.3 670.5,391.0 671.1,409.3 716.7,411.8 717.2,446.2 773.1,448.3" fill="none" stroke="#ff2020" stroke-width="1.15" /><polyline points="714.0,365.0 712.7,404.7 774.5,408.6" fill="none" stroke="#ff2020" stroke-width="1.15" /><polyline points="700.0,410.8 716.7,411.8" fill="none" stroke="#ff2020" stroke-width="1.15" /><polyline points="844.6,374.0 841.9,418.9 817.4,418.0 815.5,450.2 862.2,452.6 880.9,434.5 892.5,433.9 895.2,377.3" fill="none" stroke="#ff2020" stroke-width="1.15" /><polyline points="846.0,119.0 840.6,261.8 882.0,263.7 883.9,219.4 893.5,218.1 897.0,119.0" fill="none" stroke="#ff2020" stroke-width="1.15" /><polyline points="882.0,263.7 891.2,265.5 884.9,374.0" fill="none" stroke="#ff2020" stroke-width="1.15" /><polyline points="1319.3,119.0 1306.6,325.5 1296.6,487.5 1359.0,488.8" fill="none" stroke="#ff2020" stroke-width="1.15" /><polyline points="1352.0,288.5 1359.0,288.5" fill="none" stroke="#ff2020" stroke-width="1.15" /><circle cx="448.2" cy="208.5" r="2.1" fill="none" stroke="#f55" stroke-width="0.7"/><circle cx="567.2" cy="220.4" r="2.1" fill="none" stroke="#f55" stroke-width="0.7"/><circle cx="438.2" cy="436.8" r="2.1" fill="none" stroke="#f55" stroke-width="0.7"/><circle cx="657.6" cy="464.7" r="2.1" fill="none" stroke="#f55" stroke-width="0.7"/><circle cx="918.4" cy="464.7" r="2.1" fill="none" stroke="#f55" stroke-width="0.7"/><circle cx="969.6" cy="165.2" r="2.1" fill="none" stroke="#f55" stroke-width="0.7"/><circle cx="738.8" cy="202.8" r="2.1" fill="none" stroke="#f55" stroke-width="0.7"/><circle cx="749" cy="386.1" r="2.1" fill="none" stroke="#f55" stroke-width="0.7"/><circle cx="1259.3" cy="353.2" r="2.1" fill="none" stroke="#f55" stroke-width="0.7"/><text x="442.4" y="325.6" text-anchor="middle" font-family="Liberation Sans, sans-serif" font-style="italic" font-size="9" fill="#4a6ad8" transform="rotate(0 442.4 322.6)">z</text><text x="565.2" y="331.4" text-anchor="middle" font-family="Liberation Sans, sans-serif" font-style="italic" font-size="9" fill="#4a6ad8" transform="rotate(0 565.2 328.4)">z</text><text x="441.2" y="384" text-anchor="middle" font-family="Liberation Sans, sans-serif" font-style="italic" font-size="9" fill="#4a6ad8" transform="rotate(0 441.2 381)">z</text><text x="648.4" y="392.6" text-anchor="middle" font-family="Liberation Sans, sans-serif" font-style="italic" font-size="9" fill="#4a6ad8" transform="rotate(0 648.4 389.6)">z</text><text x="715.8" y="386.8" text-anchor="middle" font-family="Liberation Sans, sans-serif" font-style="italic" font-size="9" fill="#4a6ad8" transform="rotate(80 715.8 383.8)">z</text><text x="713.4" y="387.6" text-anchor="middle" font-family="Liberation Sans, sans-serif" font-style="italic" font-size="9" fill="#4a6ad8" transform="rotate(80 713.4 384.6)">z</text><text x="897.4" y="127.4" text-anchor="middle" font-family="Liberation Sans, sans-serif" font-style="italic" font-size="9" fill="#4a6ad8" transform="rotate(80 897.4 124.4)">z</text><text x="843.5" y="186.4" text-anchor="middle" font-family="Liberation Sans, sans-serif" font-style="italic" font-size="9" fill="#4a6ad8" transform="rotate(80 843.5 183.4)">z</text><text x="894.2" y="408.8" text-anchor="middle" font-family="Liberation Sans, sans-serif" font-style="italic" font-size="9" fill="#4a6ad8" transform="rotate(80 894.2 405.8)">z</text><text x="1302.6" y="390.5" text-anchor="middle" font-family="Liberation Sans, sans-serif" font-style="italic" font-size="9" fill="#4a6ad8" transform="rotate(80 1302.6 387.5)">z</text><text x="303" y="415" text-anchor="middle" font-family="Liberation Sans, sans-serif" font-style="italic" font-size="9" fill="#4a6ad8" transform="rotate(80 303 412)">z</text><circle cx="479" cy="336.8" r="6.1" fill="none" stroke="#1d7a0c" stroke-width="1.9"/><circle cx="478.2" cy="364.7" r="6.1" fill="none" stroke="#1d7a0c" stroke-width="1.9"/><circle cx="589.5" cy="345.3" r="6.1" fill="none" stroke="#1d7a0c" stroke-width="1.9"/><circle cx="557.3" cy="387.7" r="6.1" fill="none" stroke="#1d7a0c" stroke-width="1.9"/><circle cx="858.2" cy="418.5" r="6.1" fill="none" stroke="#1d7a0c" stroke-width="1.9"/><circle cx="872.4" cy="173.8" r="6.1" fill="none" stroke="#1d7a0c" stroke-width="1.9"/><circle cx="328.9" cy="389.2" r="6.1" fill="none" stroke="#1d7a0c" stroke-width="1.9"/><g fill="none" stroke="#0a8a0a" stroke-width="2"><rect x="323.8" y="262.2" width="21" height="27.6" rx="10.5" ry="11"/><path d="M334.3 289.8V296.8H353"/></g><g fill="none" stroke="#0a8a0a" stroke-width="2"><rect x="1324.4" y="342.7" width="21" height="27.6" rx="10.5" ry="11"/><path d="M1334.9 370.3V378H1354"/></g><text transform="translate(1109.5 405.6) rotate(-90)" font-family="Liberation Sans, sans-serif" font-size="26.4" fill="#1a56b0">Griesgasse</text><text x="446.3" y="256.0" text-anchor="middle" font-family="Liberation Sans, sans-serif" font-style="italic" font-size="10.8" fill="#111">393</text><text x="568.3" y="264.79999999999995" text-anchor="middle" font-family="Liberation Sans, sans-serif" font-style="italic" font-size="10.8" fill="#111">392</text><text x="437.2" y="458.0" text-anchor="middle" font-family="Liberation Sans, sans-serif" font-style="italic" font-size="10.8" fill="#111">394</text><text x="643.2" y="469.9" text-anchor="middle" font-family="Liberation Sans, sans-serif" font-style="italic" font-size="10.8" fill="#111">391</text><text x="896.3" y="484.9" text-anchor="middle" font-family="Liberation Sans, sans-serif" font-style="italic" font-size="10.8" fill="#111">390</text><text x="828.5" y="194.1" text-anchor="middle" font-family="Liberation Sans, sans-serif" font-style="italic" font-size="10.8" fill="#111">398</text><text x="1261.3" y="363.7" text-anchor="middle" font-family="Liberation Sans, sans-serif" font-style="italic" font-size="10.8" fill="#111">8</text><polygon points="548.2,100.0 538.0,163.0 618.8,178.1 611.1,356.1 689.8,360.9 714.2,364.5 778.7,369.7 883.5,376.0 895.0,377.3 1025.2,385.3 1041.9,117.5 1042.9,100.0" fill="url(#hx)" stroke="#00ffff" stroke-width="1"/><polygon points="516.6,350.5 611.1,356.1 689.8,360.9 714.2,364.5 778.7,369.7 776.2,409.0 768.8,578.4 508.5,566.5" fill="url(#hx)" stroke="#00ffff" stroke-width="1"/><polygon points="778.7,369.7 883.5,376.0 895.0,377.3 1025.2,385.3 1010.6,590.3 768.8,578.4 776.2,409.0" fill="url(#hx)" stroke="#00ffff" stroke-width="1"/><line x1="548.2" y1="100" x2="538" y2="163" stroke="#fe0000" stroke-width="1.1"/><line x1="538" y1="163" x2="618.8" y2="178.1" stroke="#fe0000" stroke-width="1.1"/><line x1="618.8" y1="178.1" x2="611.1" y2="356.1" stroke="#fe0000" stroke-width="1.1"/><line x1="611.1" y1="356.1" x2="689.8" y2="360.9" stroke="#fe0000" stroke-width="1.1"/><line x1="689.8" y1="360.9" x2="714.2" y2="364.5" stroke="#fe0000" stroke-width="1.1"/><line x1="714.2" y1="364.5" x2="778.7" y2="369.7" stroke="#fe0000" stroke-width="1.1"/><line x1="778.7" y1="369.7" x2="883.5" y2="376" stroke="#fe0000" stroke-width="1.1"/><line x1="883.5" y1="376" x2="895" y2="377.3" stroke="#fe0000" stroke-width="1.1"/><line x1="895" y1="377.3" x2="1025.2" y2="385.3" stroke="#fe0000" stroke-width="1.1"/><line x1="1025.2" y1="385.3" x2="1041.9" y2="117.5" stroke="#fe0000" stroke-width="1.1"/><path d="M548.2 100.0L550.2 113.5L542.1 112.2ZM538.0 163.0L536.0 149.5L544.1 150.8ZM538.0 163.0L551.5 161.4L550.0 169.4ZM618.8 178.1L605.3 179.7L606.8 171.7ZM618.8 178.1L622.3 191.3L614.1 190.9ZM611.1 356.1L607.6 342.9L615.8 343.3ZM611.1 356.1L624.3 352.8L623.8 361.0ZM689.8 360.9L676.6 364.2L677.1 356.0ZM689.8 360.9L703.3 358.7L702.1 366.9ZM714.2 364.5L700.7 366.7L701.9 358.5ZM714.2 364.5L727.5 361.5L726.8 369.6ZM778.7 369.7L765.4 372.7L766.1 364.6ZM778.7 369.7L791.9 366.4L791.4 374.6ZM883.5 376.0L870.3 379.3L870.8 371.1ZM883.5 376.0L896.9 373.4L896.0 381.5ZM895.0 377.3L881.6 379.9L882.5 371.8ZM895.0 377.3L908.2 374.0L907.7 382.2ZM1025.2 385.3L1012.0 388.6L1012.5 380.4ZM1025.2 385.3L1021.9 372.1L1030.1 372.6ZM1041.9 117.5L1045.2 130.7L1037.0 130.2Z" fill="#fe0000"/><circle cx="548.2" cy="100" r="2.6" fill="#fe0000"/><circle cx="538" cy="163" r="2.6" fill="#fe0000"/><circle cx="618.8" cy="178.1" r="2.6" fill="#fe0000"/><circle cx="611.1" cy="356.1" r="2.6" fill="#fe0000"/><circle cx="689.8" cy="360.9" r="2.6" fill="#fe0000"/><circle cx="714.2" cy="364.5" r="2.6" fill="#fe0000"/><circle cx="778.7" cy="369.7" r="2.6" fill="#fe0000"/><circle cx="883.5" cy="376" r="2.6" fill="#fe0000"/><circle cx="895" cy="377.3" r="2.6" fill="#fe0000"/><circle cx="1025.2" cy="385.3" r="2.6" fill="#fe0000"/><circle cx="1041.9" cy="117.5" r="2.6" fill="#fe0000"/><line x1="516.6" y1="350.5" x2="611.1" y2="356.1" stroke="#fe0000" stroke-width="1.1"/><line x1="611.1" y1="356.1" x2="689.8" y2="360.9" stroke="#fe0000" stroke-width="1.1"/><line x1="689.8" y1="360.9" x2="714.2" y2="364.5" stroke="#fe0000" stroke-width="1.1"/><line x1="714.2" y1="364.5" x2="778.7" y2="369.7" stroke="#fe0000" stroke-width="1.1"/><line x1="778.7" y1="369.7" x2="776.2" y2="409" stroke="#fe0000" stroke-width="1.1"/><line x1="776.2" y1="409" x2="768.8" y2="578.4" stroke="#fe0000" stroke-width="1.1"/><line x1="768.8" y1="578.4" x2="508.5" y2="566.5" stroke="#fe0000" stroke-width="1.1"/><line x1="508.5" y1="566.5" x2="516.6" y2="350.5" stroke="#fe0000" stroke-width="1.1"/><path d="M516.6 350.5L529.8 347.2L529.3 355.4ZM611.1 356.1L597.9 359.4L598.4 351.2ZM611.1 356.1L624.3 352.8L623.8 361.0ZM689.8 360.9L676.6 364.2L677.1 356.0ZM689.8 360.9L703.3 358.7L702.1 366.9ZM714.2 364.5L700.7 366.7L701.9 358.5ZM714.2 364.5L727.5 361.5L726.8 369.6ZM778.7 369.7L765.4 372.7L766.1 364.6ZM778.7 369.7L782.0 382.9L773.8 382.4ZM776.2 409.0L772.9 395.8L781.1 396.3ZM776.2 409.0L779.7 422.2L771.5 421.8ZM768.8 578.4L765.3 565.2L773.5 565.6ZM768.8 578.4L755.6 581.9L756.0 573.7ZM508.5 566.5L521.7 563.0L521.3 571.2ZM508.5 566.5L504.9 553.4L513.1 553.7ZM516.6 350.5L520.2 363.6L512.0 363.3Z" fill="#fe0000"/><circle cx="516.6" cy="350.5" r="2.6" fill="#fe0000"/><circle cx="611.1" cy="356.1" r="2.6" fill="#fe0000"/><circle cx="689.8" cy="360.9" r="2.6" fill="#fe0000"/><circle cx="714.2" cy="364.5" r="2.6" fill="#fe0000"/><circle cx="778.7" cy="369.7" r="2.6" fill="#fe0000"/><circle cx="776.2" cy="409" r="2.6" fill="#fe0000"/><circle cx="768.8" cy="578.4" r="2.6" fill="#fe0000"/><circle cx="508.5" cy="566.5" r="2.6" fill="#fe0000"/><line x1="778.7" y1="369.7" x2="883.5" y2="376" stroke="#fe0000" stroke-width="1.5"/><line x1="883.5" y1="376" x2="895" y2="377.3" stroke="#fe0000" stroke-width="1.5"/><line x1="895" y1="377.3" x2="1025.2" y2="385.3" stroke="#fe0000" stroke-width="1.5"/><line x1="1025.2" y1="385.3" x2="1010.6" y2="590.3" stroke="#fe0000" stroke-width="1.5"/><line x1="1010.6" y1="590.3" x2="768.8" y2="578.4" stroke="#fe0000" stroke-width="1.5"/><line x1="768.8" y1="578.4" x2="776.2" y2="409" stroke="#fe0000" stroke-width="1.5"/><line x1="776.2" y1="409" x2="778.7" y2="369.7" stroke="#fe0000" stroke-width="1.5"/><path d="M778.7 369.7L791.9 366.4L791.4 374.6ZM883.5 376.0L870.3 379.3L870.8 371.1ZM883.5 376.0L896.9 373.4L896.0 381.5ZM895.0 377.3L881.6 379.9L882.5 371.8ZM895.0 377.3L908.2 374.0L907.7 382.2ZM1025.2 385.3L1012.0 388.6L1012.5 380.4ZM1025.2 385.3L1028.4 398.6L1020.2 398.0ZM1010.6 590.3L1007.4 577.0L1015.6 577.6ZM1010.6 590.3L997.4 593.8L997.8 585.6ZM768.8 578.4L782.0 574.9L781.6 583.1ZM768.8 578.4L765.3 565.2L773.5 565.6ZM776.2 409.0L779.7 422.2L771.5 421.8ZM776.2 409.0L772.9 395.8L781.1 396.3ZM778.7 369.7L782.0 382.9L773.8 382.4Z" fill="#fe0000"/><circle cx="778.7" cy="369.7" r="2.6" fill="#fe0000"/><circle cx="883.5" cy="376" r="2.6" fill="#fe0000"/><circle cx="895" cy="377.3" r="2.6" fill="#fe0000"/><circle cx="1025.2" cy="385.3" r="2.6" fill="#fe0000"/><circle cx="1010.6" cy="590.3" r="2.6" fill="#fe0000"/><circle cx="768.8" cy="578.4" r="2.6" fill="#fe0000"/><circle cx="776.2" cy="409" r="2.6" fill="#fe0000"/><text transform="translate(580.2 159.1) rotate(10.6)" y="3.7" text-anchor="middle" font-family="DejaVu Sans, sans-serif" font-size="10" fill="#000">8,45 m</text><text transform="translate(603.4 266) rotate(-87.5)" y="3.7" text-anchor="middle" font-family="DejaVu Sans, sans-serif" font-size="10" fill="#000">18,05 m</text><text transform="translate(1022.1 250.8) rotate(-86.7)" y="3.7" text-anchor="middle" font-family="DejaVu Sans, sans-serif" font-size="10" fill="#000">27,33 m</text><text transform="translate(564.1 341.3) rotate(3.4)" y="3.7" text-anchor="middle" font-family="DejaVu Sans, sans-serif" font-size="10" fill="#000">9,61 m</text><text transform="translate(636.9 344.5) rotate(0)" y="3.7" text-anchor="middle" font-family="DejaVu Sans, sans-serif" font-size="10" fill="#000">96,35 m</text><text transform="translate(650.7 348.6) rotate(3.5)" y="3.7" text-anchor="middle" font-family="DejaVu Sans, sans-serif" font-size="10" fill="#000">7,98 m</text><text transform="translate(703.3 351.5) rotate(8.6)" y="3.7" text-anchor="middle" font-family="DejaVu Sans, sans-serif" font-size="10" fill="#000" stroke="#000" stroke-width="0.35">2,54 m</text><text transform="translate(748.3 355.6) rotate(4.6)" y="3.7" text-anchor="middle" font-family="DejaVu Sans, sans-serif" font-size="10" fill="#000" stroke="#000" stroke-width="0.35">6,55 m</text><text transform="translate(831.6 361.6) rotate(3.4)" y="3.7" text-anchor="middle" font-family="DejaVu Sans, sans-serif" font-size="10" fill="#000" stroke="#000" stroke-width="0.5">10,70 m</text><text transform="translate(891.2 366.1) rotate(6.4)" y="3.7" text-anchor="middle" font-family="DejaVu Sans, sans-serif" font-size="10" fill="#000" stroke="#000" stroke-width="0.5">1,16 m</text><text transform="translate(960.9 370.5) rotate(3.5)" y="3.7" text-anchor="middle" font-family="DejaVu Sans, sans-serif" font-size="10" fill="#000" stroke="#000" stroke-width="0.5">13,23 m</text><text transform="translate(1051.5 374.7) rotate(0)" y="3.7" text-anchor="middle" font-family="DejaVu Sans, sans-serif" font-size="10" fill="#000" stroke="#000" stroke-width="0.5">91,87 m</text><text transform="translate(765 388.5) rotate(-89)" y="3.7" text-anchor="middle" font-family="DejaVu Sans, sans-serif" font-size="10" fill="#000" stroke="#000" stroke-width="0.5">3,96 m</text><text transform="translate(760.6 493.5) rotate(-87.5)" y="3.7" text-anchor="middle" font-family="DejaVu Sans, sans-serif" font-size="10" fill="#000" stroke="#000" stroke-width="0.5">17,30 m</text><text transform="translate(500.2 457) rotate(-88)" y="3.7" text-anchor="middle" font-family="DejaVu Sans, sans-serif" font-size="10" fill="#000">21,92 m</text><text transform="translate(638.1 561.3) rotate(2.6)" y="3.7" text-anchor="middle" font-family="DejaVu Sans, sans-serif" font-size="10" fill="#000">26,50 m</text><text transform="translate(890 573.3) rotate(2.8)" y="3.7" text-anchor="middle" font-family="DejaVu Sans, sans-serif" font-size="10" fill="#000" stroke="#000" stroke-width="0.4">24,66 m</text><text transform="translate(1006.8 487.8) rotate(-86.4)" y="3.7" text-anchor="middle" font-family="DejaVu Sans, sans-serif" font-size="10" fill="#000" stroke="#000" stroke-width="0.4">20,87 m</text><circle cx="330.4" cy="571.6" r="17.5" fill="#000"/><path d="M330.6 556L338.6 585.6L330.4 582.4L322.2 585.6Z" fill="#fff"/><text x="360.2" y="566.8" font-family="Liberation Sans, sans-serif" font-weight="700" font-size="10" fill="#000" stroke="#f5f5f5" stroke-width="2" paint-order="stroke">© SynerGIS Informationssysteme GmbH</text><text x="360.2" y="578.6" font-family="Liberation Sans, sans-serif" font-weight="700" font-size="10" fill="#000" stroke="#f5f5f5" stroke-width="2" paint-order="stroke">Sample Project © Stadt Graz</text><text x="360.2" y="589.8" font-family="Liberation Sans, sans-serif" font-weight="700" font-size="10" fill="#000" stroke="#f5f5f5" stroke-width="2" paint-order="stroke">Editieren © SynerGIS</text><rect x="1076" y="585.3" width="198" height="4.7" fill="#fff" stroke="#000" stroke-width="1"/><rect x="1125.3" y="585.3" width="48.4" height="4.7" fill="#000"/><rect x="1224" y="585.3" width="50" height="4.7" fill="#000"/><text x="1073" y="582.8" font-family="Liberation Sans, sans-serif" font-weight="700" font-size="10" fill="#000">0</text><text x="1267" y="582.8" font-family="Liberation Sans, sans-serif" font-weight="700" font-size="10" fill="#000" textLength="39">20Meter</text><rect x="890" y="601.5" width="435" height="17.5" fill="#ffffff" fill-opacity="0.45"/></svg>
<div class="a" style="left:300px;top:619px;width:1059px;height:1px;background:#c8c8c8;"></div>
<span id="t49" class="a t" style="left:893.5px;top:602.84px;font:400 12px/20px 'Liberation Sans', sans-serif;color:#7d7d7d;letter-spacing:-0.127px;">Web Mercator (Auxiliary Sphere) Rechtswert: 1719833,50 / Hochwert: 5954887,50</span>
<div class="a" style="left:1325px;top:594px;width:34px;height:25px;background:#fff;border:1px solid #d0d0d0;"></div>
<svg class="a" style="left:1335px;top:599px;" width="15" height="15" viewBox="0 0 15 15"><circle cx="7.5" cy="7.5" r="6.3" fill="none" stroke="#666" stroke-width="1.6"/><path d="M7.5 3.6V7.8H11.4" fill="none" stroke="#666" stroke-width="1.6"/></svg>
<div class="a" style="left:1153px;top:124px;width:202.5px;height:202px;background:#fff;border:1px solid #c4c4c4;"></div>
<svg class="a" style="left:1159.3px;top:130px;overflow:hidden;" width="190" height="190" viewBox="0 0 190 190"><rect width="190" height="190" fill="#efece0"/><path d="M123.9 21.7L144.4 26.5L162.5 44.6L173.3 66.3L176.9 100.1L172.1 114.5L160.0 119.4L150.4 95.3L148.0 88.0L138.3 54.3L128.7 39.8L125.1 30.2Z M85.3 20.5L99.8 16.9L119.1 22.9L125.1 36.2L123.9 49.4L114.2 73.6L107.0 79.6L97.4 73.6L90.1 56.7L85.3 37.4Z M0.5 33.8L8.2 32.6L17.8 38.6L19.0 49.4L8.2 55.5L0.5 49.4Z M19.0 31.4L25.0 30.2L27.0 37.4L21.4 39.8Z M14.2 74.8L45.5 63.9L43.1 78.4L16.6 84.4Z M61.2 72.4L67.2 71.1L68.4 78.4L62.4 79.6Z M31.1 145.9L39.5 144.0L40.2 148.3L31.8 149.5Z M84.1 177.2L95.0 177.7L104.6 188.1L84.1 188.8Z M164.9 166.4L173.3 164.0L174.5 174.8L168.5 178.4Z M184.2 73.6L189.5 68.7L189.5 86.8L184.2 85.6Z M138.3 124.2L152.8 112.1L157.6 115.7L143.2 129.0Z" fill="#d6fbc3" stroke="#7ab648" stroke-width="0.5"/><path d="M90.1 21.7L99.8 16.9L114.2 22.9L123.9 36.2L114.2 44.6L109.4 61.5L104.6 66.3L101.0 49.4L90.1 49.4L88.9 32.6Z" fill="#7fc36c" stroke="#3d8f2a" stroke-width="0.8"/><path d="M92.0 23.0L90.9 32.6L92.0 47.4L101.0 47.4L101.2 47.5L101.4 47.5L101.6 47.5L101.7 47.6L101.9 47.7L102.1 47.8L102.2 47.9L102.4 48.0L102.5 48.2L102.6 48.3L102.7 48.5L102.8 48.7L102.9 48.8L102.9 49.0L105.8 62.3L107.6 60.5L112.3 44.1L112.4 43.9L112.5 43.7L112.6 43.6L112.7 43.4L112.8 43.3L112.9 43.1L121.2 35.9L113.0 24.6L99.9 19.1Z" fill="#a6dc90" stroke="#3d8f2a" stroke-width="0.7"/><path d="M2.1 9.3L0.7 9.5L0.7 15.0L0.7 19.2L5.7 19.5L8.1 16.9Z M0.6 27.2L9.0 30.3L5.6 20.7L0.6 20.4L0.6 25.0Z M0.4 56.6L7.2 54.7L0.5 49.4L0.5 42.6L0.4 42.6Z M0.5 59.7L0.5 63.5L10.4 74.1L11.1 74.0L12.5 64.9Z M0.4 74.2L7.6 75.9L9.6 74.5L0.4 64.7Z M0.7 86.8L0.7 95.4L3.6 94.6L7.1 88.9L3.7 81.9L0.7 82.7Z M0.4 99.7L8.1 107.5L11.8 103.0L12.3 99.2L4.0 95.6L0.4 96.6Z M7.4 108.4L0.7 101.6L0.7 109.7L7.3 112.0Z M1.2 111.9L1.2 121.7L7.3 119.1L8.4 116.4L7.1 113.9Z M0.5 130.3L8.7 137.1L9.4 136.7L12.1 125.9L8.1 120.6L0.5 123.8Z M8.2 137.8L0.5 131.4L0.5 144.1L6.7 142.5Z M0.7 145.3L0.7 155.8L7.7 152.5L6.5 143.7Z M12.7 158.4L12.2 156.3L8.4 153.7L0.7 157.4L0.7 163.0L8.1 163.9Z M9.0 167.1L8.0 165.3L0.7 164.4L0.7 178.4L2.5 178.7L9.0 169.2Z M14.6 178.9L9.6 171.6L4.5 179.1L5.6 179.6L13.9 180.0Z M2.6 179.9L0.4 179.4L0.4 189.6L5.3 189.6L4.9 181.1Z M16.9 0.5L10.2 0.5L6.5 0.5L3.9 7.4L15.5 7.4Z M9.2 16.6L15.4 16.6L17.6 13.1L17.6 12.5L15.6 8.2L3.4 8.3L3.0 8.6Z M15.5 27.3L14.6 18.2L9.5 18.2L7.4 20.5L10.6 29.6Z M21.4 39.7L19.0 31.4L20.9 31.0L20.8 29.9L16.8 28.7L10.5 31.7L10.0 33.7L17.8 38.6L17.9 39.7Z M18.1 41.1L18.7 47.0L20.2 47.3L22.3 41.6L22.0 41.1Z M17.4 57.1L18.1 56.9L20.6 50.0L20.1 48.7L18.9 48.4L19.0 49.4L10.7 54.1Z M15.8 61.0L16.9 58.1L9.7 54.9L8.7 55.2L8.2 55.5L8.0 55.4L0.5 57.5L0.5 58.7L12.9 64.1Z M16.1 62.2L13.5 64.9L12.1 74.1L14.0 75.0L19.2 67.9Z M10.6 75.7L8.5 77.2L5.5 81.2L8.5 87.4L14.8 85.3L13.3 76.6L11.2 75.7Z M12.7 98.5L15.2 97.6L18.3 90.8L18.1 88.4L16.1 86.6L8.1 89.2L4.6 95.0Z M12.6 103.0L19.0 109.4L20.9 108.2L22.3 103.1L15.4 98.4L13.1 99.3Z M18.4 110.0L12.2 103.8L8.5 108.3L8.3 112.9L9.9 115.9L15.6 114.1Z M10.6 117.3L9.6 119.8L13.2 124.7L16.7 125.3L20.1 119.4L15.6 115.8Z M12.9 126.4L10.3 136.5L17.1 136.6L23.4 131.9L17.2 127.0Z M19.1 147.9L20.9 147.4L20.9 147.3L16.9 137.5L9.9 137.4L9.1 138.0L7.5 142.7Z M8.9 152.6L12.8 155.3L18.3 148.5L7.7 143.8Z M13.6 156.1L14.1 158.1L16.0 158.8L23.9 153.2L20.9 148.6L19.4 149.0Z M10.2 166.3L18.9 168.4L20.7 164.7L15.8 160.2L13.7 159.4L9.3 164.7Z M16.2 178.3L16.2 178.3L19.6 174.3L18.9 169.5L10.1 167.4L10.0 169.4Z M17.0 189.6L14.2 181.7L5.7 181.3L6.2 189.6Z M27.8 8.0L30.1 0.4L17.7 0.4L16.3 7.8L18.2 11.9Z M29.2 18.3L29.3 18.2L29.7 13.5L27.6 9.8L19.9 13.0Z M28.7 19.8L18.1 13.9L16.1 17.1L17.2 27.6L21.4 28.9L24.9 28.0Z M32.4 41.5L26.4 29.4L25.2 28.8L21.9 29.7L22.0 30.8L25.0 30.2L27.0 37.4L22.6 39.3L22.7 40.3L23.3 41.1L32.2 41.7L32.4 41.5Z M23.3 41.9L21.0 48.1L21.6 49.6L30.6 50.7L31.9 42.4Z M19.5 57.1L26.6 60.3L31.4 53.5L30.5 51.7L21.8 50.7Z M16.8 61.2L20.2 67.3L27.6 65.5L26.4 61.6L18.6 58.0L17.8 58.3Z M29.2 67.5L28.1 66.3L20.1 68.3L15.7 74.2L29.3 69.5Z M18.6 87.4L29.8 83.2L29.5 81.5L16.6 84.4L16.5 84.1L16.8 85.8Z M30.6 84.1L18.9 88.4L19.1 90.6L27.0 95.5L32.5 86.0Z M18.9 91.7L16.2 97.7L22.8 102.3L27.2 100.0L26.7 96.4Z M27.9 100.9L23.3 103.3L21.9 108.3L30.3 113.2L30.7 112.9L29.7 104.4L28.2 101.0Z M28.9 114.3L21.3 109.9L19.8 110.9L17.5 114.2L22.1 117.9L27.3 118.7L27.3 118.7Z M17.9 126.5L24.3 131.5L26.8 131.4L27.3 120.3L21.8 119.5Z M18.7 137.4L21.9 145.4L23.6 144.1L27.0 133.2L26.8 133.0L24.6 133.1Z M25.3 153.0L25.9 153.4L31.6 148.4L31.1 146.2L24.8 145.4L21.8 147.7L21.8 147.7Z M17.0 159.6L21.7 163.9L28.4 161.7L29.3 160.7L25.5 154.5L24.9 154.0Z M28.2 162.9L22.0 165.0L19.8 169.3L20.5 173.9L28.7 174.7L29.2 171.8Z M17.2 178.4L27.7 182.8L31.3 179.6L31.6 178.8L29.0 175.7L20.2 174.9Z M16.5 179.1L16.4 179.2L14.9 181.3L18.0 189.6L23.7 189.6L27.2 183.5Z M31.5 11.7L34.8 10.2L33.3 1.2L31.6 1.2L29.4 8.2Z M31.2 18.4L40.0 20.2L42.5 19.8L41.2 13.9L36.2 11.7L31.6 13.7Z M38.8 21.4L30.6 19.7L29.8 20.1L26.1 28.0L26.9 28.5L33.5 28.9Z M33.3 30.8L28.7 30.5L33.5 40.0L38.3 38.1L38.1 36.0Z M38.9 48.5L39.5 42.8L39.3 39.7L33.7 42.0Z M32.2 50.9L33.0 52.6L38.4 53.9L38.8 53.6L38.3 50.7L33.2 44.4Z M27.4 61.3L28.8 65.6L29.7 66.7L38.5 63.1L38.1 55.6L32.5 54.2Z M39.0 63.9L30.0 67.7L30.2 69.2L41.2 65.4Z M38.2 84.7L38.3 79.5L31.3 81.1L31.7 83.0L33.6 84.8Z M34.9 98.1L32.7 88.8L28.4 96.3L28.9 99.3Z M29.3 100.9L30.5 103.9L35.8 105.4L36.1 99.6Z M31.9 112.4L37.4 111.6L37.6 111.3L35.7 106.5L31.0 105.3Z M29.9 118.6L41.4 123.2L39.7 117.7L37.2 113.5L31.7 114.3L31.3 114.6Z M28.9 131.6L29.9 131.8L39.5 125.0L28.8 120.8L28.4 131.2Z M33.4 138.3L29.6 134.2L29.2 134.1L26.2 143.8L32.9 144.7L33.8 141.5Z M38.5 160.5L41.7 149.8L36.6 148.8L35.5 149.0L35.3 159.7Z M30.1 160.3L34.3 159.8L34.5 149.1L31.8 149.5L31.8 149.4L26.4 154.2Z M39.9 162.6L38.6 161.7L34.7 160.7L30.2 161.2L29.3 162.4L30.2 171.0L39.3 167.2Z M34.6 176.9L37.6 169.8L30.8 172.7L30.5 174.9L32.5 177.4Z M28.2 183.7L24.8 189.4L35.0 189.4L31.5 180.8Z M41.4 12.5L42.7 8.7L40.3 0.7L35.1 0.7L36.8 10.5Z M42.3 13.5L43.7 20.1L44.2 20.4L47.5 19.0L52.8 8.9L43.7 9.1Z M40.7 22.0L35.4 29.5L39.0 33.4L43.9 24.4L43.1 21.7L43.1 21.6Z M39.9 38.6L40.2 38.7L47.6 40.3L50.3 36.9L50.8 30.7L45.2 25.2L39.7 35.5Z M47.5 41.1L40.5 39.6L40.6 42.8L43.9 51.3L47.6 41.4Z M42.6 52.5L40.9 48.0L40.6 50.2L41.1 52.8Z M39.8 63.0L42.6 64.9L45.5 63.9L45.1 66.6L45.8 67.1L49.1 66.9L49.5 66.6L48.7 56.4L43.6 54.2L40.4 54.9L39.3 55.5Z M48.4 69.6L48.4 68.9L46.1 69.0L44.4 70.9L43.6 75.7L46.9 80.8Z M46.6 83.6L43.1 78.3L43.1 78.4L40.0 79.1L39.9 85.4L44.2 86.3Z M45.7 97.7L46.0 96.0L43.5 87.9L39.2 87.0L34.8 87.1L37.3 97.9Z M43.1 107.3L46.3 99.5L46.3 99.4L37.1 99.7L36.8 105.9L38.7 110.5Z M40.9 116.6L47.9 112.6L43.5 108.2L38.8 111.6L38.4 112.2Z M48.7 122.2L48.6 113.3L48.6 113.3L41.3 117.5L43.4 124.0Z M34.7 137.3L45.2 135.7L45.3 133.5L43.0 124.9L42.2 125.1L30.8 133.1Z M47.5 139.6L45.4 136.5L35.1 138.1L35.5 141.2L45.2 144.0Z M42.3 148.6L44.5 147.3L44.7 145.1L35.5 142.4L34.8 145.0L39.5 144.0L40.2 148.2Z M46.6 149.6L45.1 148.3L42.8 149.6L39.3 161.0L40.6 162.0L49.0 161.6L50.4 161.1Z M46.4 175.6L48.6 162.4L40.9 162.8L40.3 167.5Z M46.1 180.2L46.7 179.5L46.8 179.4L46.0 176.9L40.0 169.0L36.4 177.5Z M36.6 188.8L45.2 188.8L45.2 182.0L35.4 179.2L33.0 179.7L33.0 179.8Z M44.3 7.5L53.2 7.2L56.0 5.3L55.5 1.9L55.1 1.2L42.5 1.2Z M58.2 7.9L57.8 7.0L57.2 6.5L53.9 8.7L48.6 19.0L55.7 19.6L58.0 17.0Z M45.0 21.3L45.8 24.2L51.4 29.7L58.4 27.2L55.4 20.7L48.0 20.1Z M52.3 31.4L52.0 35.9L56.3 36.2L58.6 29.1Z M54.8 46.0L56.6 45.2L56.5 38.6L51.3 38.3L49.2 40.8Z M53.6 52.3L54.0 47.6L48.3 42.4L44.4 52.7L44.3 53.1L49.3 55.3Z M49.9 56.2L50.7 66.3L58.0 65.6L60.7 57.5L60.6 57.0L54.1 53.2Z M48.6 82.6L55.0 82.2L56.0 80.8L50.0 71.6Z M57.4 91.5L56.9 86.0L55.2 83.3L47.9 83.8L47.6 84.0L45.0 87.0L47.5 95.3Z M54.6 103.1L60.5 101.6L60.0 94.0L57.8 92.6L47.8 96.4L47.4 98.8L47.5 99.0Z M53.3 110.0L53.3 104.5L47.5 101.2L45.0 107.3L49.2 111.7Z M58.2 116.1L54.3 111.6L49.8 113.5L49.8 121.9L54.4 122.3L58.4 119.8Z M54.1 123.4L49.2 123.0L43.8 124.8L46.0 132.9L55.1 129.9Z M57.0 139.4L57.2 134.1L55.4 130.9L46.2 133.8L46.2 135.9L48.3 139.1Z M45.9 147.5L47.2 148.6L57.1 148.0L57.8 141.3L57.2 140.7L48.4 140.3L46.1 144.8Z M57.4 150.0L57.2 149.4L47.9 150.0L51.4 160.7L53.4 160.9Z M51.0 162.6L50.1 162.9L47.9 176.5L48.2 177.5L53.8 173.7L53.2 162.8Z M58.4 182.1L63.1 180.3L61.1 177.7L55.3 175.6L49.7 179.4Z M47.6 180.7L47.1 181.3L47.1 189.3L53.7 189.3L57.3 183.7Z M69.2 6.0L73.1 0.5L64.3 0.5L67.1 6.7Z M58.8 16.9L62.8 18.0L59.0 9.7Z M60.6 26.7L61.6 26.8L63.2 19.7L58.8 18.6L57.3 20.3L60.3 26.6Z M61.6 36.9L65.1 30.9L62.1 29.3L61.1 29.2L58.7 36.7Z M58.2 45.5L64.5 45.0L62.0 38.5L58.1 38.2Z M67.4 47.2L65.0 45.9L58.0 46.5L55.1 47.8L54.7 52.3L61.0 55.9L66.5 50.5Z M59.8 65.7L61.3 66.8L70.8 65.8L71.9 64.0L71.8 63.7L62.0 59.2Z M58.2 66.7L50.4 67.4L50.0 67.8L50.1 68.2L60.0 77.7L61.3 77.0L60.5 68.3Z M60.1 78.8L57.2 81.1L56.0 82.9L57.6 85.4L66.8 85.6L67.2 83.9L63.6 79.3L62.4 79.6L62.1 77.9L61.9 77.8Z M67.4 90.1L66.8 86.5L57.8 86.3L58.3 91.6L60.8 93.1Z M64.8 103.1L68.7 102.7L67.1 91.4L61.5 94.0L61.9 101.7Z M54.9 110.6L58.9 115.2L62.3 111.5L64.3 104.0L61.2 102.6L54.9 104.1Z M70.1 114.7L62.8 112.4L59.4 116.0L59.7 119.8L66.3 122.4L67.0 122.2Z M64.9 123.8L59.2 121.6L55.8 123.6L56.8 129.8L58.1 132.2L64.2 128.0Z M59.0 139.8L60.9 139.7L65.4 131.7L64.8 130.5L58.9 134.6L58.7 139.5Z M59.7 142.2L58.9 148.6L59.1 149.1L62.2 150.1L69.2 146.3L69.3 143.6L61.6 142.1Z M65.2 162.8L68.3 159.2L61.9 152.0L58.6 150.9L54.8 161.3Z M54.9 162.6L55.6 173.9L61.5 176.0L64.9 164.0Z M71.1 170.5L65.8 164.8L62.4 176.6L65.2 180.2L66.2 180.0L71.4 172.4Z M58.9 183.9L55.4 189.3L63.9 189.3L64.2 181.9Z M75.0 13.7L82.0 9.3L74.0 1.2L70.3 6.4Z M72.6 17.4L74.3 14.7L69.3 6.8L67.4 7.5L71.9 17.3Z M63.3 27.8L66.9 29.8L67.3 29.8L67.6 29.7L66.8 26.8L64.6 22.0Z M71.2 44.6L71.7 43.8L67.9 30.8L67.9 30.8Z M65.7 44.9L68.1 46.1L70.2 45.3L66.9 31.5L63.1 38.2Z M71.0 46.2L68.4 47.2L67.4 50.7L73.0 59.5L75.3 56.2L75.1 55.3L72.7 46.9Z M61.9 56.9L61.9 57.1L72.1 61.8L72.2 60.5L66.8 51.9Z M70.9 67.7L61.8 68.6L62.1 72.2L67.2 71.1L67.8 74.6L71.8 72.6Z M71.6 81.4L74.5 76.0L72.5 73.4L68.0 75.7L68.4 78.4L64.5 79.2L67.8 83.3Z M68.9 89.2L77.1 90.4L77.6 88.2L71.7 83.1L68.7 84.6L68.3 86.1Z M69.8 103.0L75.5 104.8L76.4 104.4L78.9 94.2L77.8 92.1L68.2 90.7Z M70.6 113.8L73.8 110.5L74.9 105.6L69.4 103.9L65.2 104.3L63.3 111.4Z M77.9 118.0L74.2 111.9L71.4 114.8L68.3 122.3L76.0 124.9L77.7 123.3Z M75.8 126.0L67.4 123.2L66.7 123.4L65.8 128.6L67.1 131.4L74.8 136.6L76.7 131.1Z M66.9 132.4L62.3 140.5L70.5 142.1L74.6 139.0L74.6 137.5Z M72.2 150.5L71.9 157.3L74.0 157.6L78.5 151.9Z M70.1 147.8L63.2 151.5L69.3 158.5L70.1 158.1L70.5 149.1Z M71.7 169.8L77.8 166.5L78.2 162.0L74.4 159.2L70.8 158.8L69.4 159.5L66.0 163.6Z M72.2 173.3L67.4 180.2L71.3 181.4L76.9 177.0L77.0 175.3Z M65.3 189.3L75.8 189.3L75.9 188.6L74.0 185.2L71.1 182.7L66.5 181.2L65.6 181.4Z M75.2 15.1L73.4 17.9L75.4 24.3L85.8 19.5L86.2 12.6L84.7 10.1L83.3 10.0Z M76.8 29.5L82.0 30.3L85.3 25.4L85.3 20.9L75.5 25.4L75.5 25.8L76.4 29.1Z M85.0 41.5L85.7 38.8L85.3 37.4L85.3 33.3L82.1 31.6L77.3 30.9L77.4 32.5L78.8 37.2Z M85.1 46.2L84.4 43.4L79.6 40.1L81.7 47.1Z M82.1 48.6L83.4 53.1L83.4 53.1L83.5 53.4L83.5 53.5L84.1 56.6L87.0 53.0L86.1 47.6Z M73.6 63.7L76.7 63.8L75.5 57.6L73.5 60.5L73.3 62.8Z M72.2 67.0L73.2 72.6L75.3 75.3L79.0 75.9L77.0 65.1L73.5 64.9Z M80.6 84.8L80.6 83.7L79.3 77.0L75.2 76.4L72.4 81.6L78.8 87.1Z M79.5 88.0L78.8 91.6L79.7 93.4L81.2 93.3L80.7 86.5Z M79.8 94.6L77.4 104.3L81.9 105.6L81.2 94.5Z M76.8 105.3L76.0 105.6L74.9 110.6L78.9 117.2L81.8 116.0L82.2 109.7L82.0 107.2L81.8 106.7Z M79.3 118.3L79.1 122.9L81.3 122.8L81.7 117.4Z M78.6 124.2L76.8 125.9L77.6 130.6L80.7 130.7L81.2 124.0Z M77.6 131.7L75.6 137.3L75.6 138.9L80.0 141.1L80.6 131.8Z M71.0 146.9L71.5 148.5L79.2 150.3L79.8 143.1L79.9 142.3L75.1 139.9L71.1 142.9Z M87.8 161.9L88.2 160.7L88.1 159.4L87.2 157.1L86.7 162.7Z M75.2 158.7L78.3 161.0L78.9 154.1Z M72.4 172.3L77.1 174.3L77.7 167.6L72.1 170.5Z M72.1 182.1L74.5 184.2L76.4 182.5L76.7 178.4Z M87.2 11.9L94.3 13.7L96.3 11.5L94.0 0.7L92.2 0.7L85.9 9.6Z M87.1 20.1L94.8 18.1L95.2 16.3L94.2 15.0L87.3 13.2L86.9 19.7Z M83.0 30.7L85.3 32.0L85.3 27.2Z M87.8 52.9L89.9 55.9L87.8 47.2L86.9 47.3Z M93.1 63.5L91.1 58.9L87.4 53.7L84.3 57.6L85.7 64.7Z M94.8 75.0L94.7 67.4L93.4 64.3L85.8 65.5L87.5 74.4Z M91.7 80.2L94.5 76.6L94.5 76.6L87.8 76.0L88.9 81.4Z M89.2 83.9L89.5 88.7L90.6 91.9L93.4 91.4L91.6 82.8Z M90.0 93.6L89.8 93.7L89.8 94.1L90.5 104.0L94.1 105.2L98.1 103.1L94.8 92.8Z M93.7 105.9L90.5 104.9L90.8 109.4L90.8 109.5L90.8 109.9L90.8 110.0L90.3 116.5L92.8 117.0L93.5 115.3Z M93.9 119.8L92.8 117.8L90.3 117.3L89.7 125.6L91.0 125.7Z M100.0 134.7L99.8 133.0L92.1 131.3L90.3 134.4L90.7 140.6Z M89.0 157.1L94.4 151.3L94.8 149.5L94.3 147.0L89.7 143.8L88.3 144.6L87.6 153.3Z M97.9 157.2L95.4 152.8L89.1 159.6L89.1 160.1Z M93.3 174.1L97.6 169.4L88.3 163.7L86.6 164.9L85.8 174.1Z M93.5 175.7L85.6 175.7L85.5 177.3L93.8 177.6L94.1 177.3Z M87.5 189.6L95.8 189.6L96.1 188.4L87.4 188.7Z M103.4 0.6L95.2 0.6L97.4 11.0L104.3 9.1Z M96.1 15.7L104.1 17.7L106.2 13.2L104.6 10.2L97.3 12.2L95.3 14.6Z M96.4 76.2L101.5 78.3L103.6 78.4L104.0 77.7L97.4 73.6L95.9 70.0L95.9 75.2Z M96.4 91.5L100.9 79.2L96.1 77.2L92.9 81.3L95.1 92.0Z M103.9 79.5L101.7 79.4L97.3 91.4L106.0 91.8L107.3 88.4L108.5 84.0Z M105.7 92.9L96.9 92.5L95.9 92.9L99.1 102.7L101.3 103.0L106.5 95.0Z M98.6 103.8L94.6 105.9L94.3 114.6L105.7 109.1L101.4 104.2Z M93.7 117.4L94.8 119.3L102.7 122.0L107.3 114.5L106.0 110.0L94.3 115.8Z M94.7 120.7L91.9 126.3L92.2 129.3L100.5 131.3L103.4 125.2L102.5 123.2Z M101.6 145.2L105.2 139.5L101.2 136.2L91.3 142.6L95.6 145.6Z M105.1 151.0L101.8 146.4L96.1 146.8L96.6 149.2L102.6 153.6Z M101.2 157.4L102.2 154.5L96.3 150.2L96.0 151.9L98.9 157.1Z M99.8 167.9L103.8 167.7L104.1 165.1L100.7 158.9L98.8 158.7L89.7 161.7Z M102.8 177.2L104.5 169.4L99.7 169.7L94.4 175.4L95.1 177.2L95.9 178.7L98.4 181.4Z M103.3 178.2L99.1 182.1L102.3 185.6L105.1 180.9Z M96.8 189.6L100.0 189.6L100.8 188.2L97.0 188.3Z M105.6 9.3L107.2 12.5L114.5 12.6L114.8 0.7L104.6 0.7Z M107.1 13.6L104.8 18.5L104.8 18.5L116.6 22.2L117.5 19.4L117.3 16.7L115.5 14.0L115.1 13.7Z M114.7 72.4L114.2 73.6L107.0 79.6L105.2 78.5L104.9 79.0L109.1 83.1L112.8 82.6L118.6 76.3L119.0 74.0Z M108.1 89.5L107.0 92.3L107.8 94.6L111.2 96.3L119.1 94.8L119.1 94.6Z M111.5 102.8L110.7 97.4L107.4 95.7L102.2 103.7L106.4 108.6L109.0 107.0Z M108.5 114.0L116.6 116.3L121.2 114.4L121.4 114.2L119.5 109.7L109.5 108.1L107.1 109.5Z M108.1 115.1L103.4 122.7L104.5 124.8L107.8 126.0L115.6 119.1L116.2 117.3Z M110.7 128.8L111.2 136.7L120.0 134.7L121.3 131.8L116.8 129.0Z M101.3 132.1L101.6 135.1L106.3 138.9L108.8 138.9L110.2 137.5L109.6 128.3L107.7 126.8L104.4 125.7Z M106.2 150.3L111.3 150.5L110.6 143.6L108.6 140.0L106.5 140.0L102.9 145.8Z M105.5 164.0L112.4 156.5L113.6 153.2L111.9 151.8L106.1 151.6L103.2 154.6L102.1 157.8Z M108.5 169.5L115.8 162.9L112.8 157.9L106.0 165.2L105.7 168.5Z M108.4 170.7L105.4 169.6L103.8 177.4L106.0 180.6L112.2 184.2L114.3 181.9L111.1 172.4Z M105.9 181.8L103.1 186.5L104.6 188.1L102.2 188.2L101.5 189.3L109.8 189.3L111.4 185.0Z M115.7 13.2L122.5 7.8L119.0 0.4L115.9 0.4L115.6 13.1Z M117.4 13.9L118.2 15.2L129.9 11.8L123.3 9.3Z M124.5 26.1L123.9 21.7L129.2 23.0L130.2 22.2L118.2 20.0L117.4 22.4L119.1 22.9L121.5 28.2Z M125.9 46.8L124.5 42.9L123.9 49.4Z M121.0 70.0L126.0 64.0L119.0 61.7Z M117.9 64.5L115.2 71.3L119.7 72.9L119.7 72.9L119.8 72.7Z M127.4 86.6L119.3 77.7L114.1 83.2L121.3 90.0L127.4 86.6Z M113.0 83.7L109.2 84.2L108.2 88.3L119.7 93.7L120.7 91.0Z M111.6 97.4L112.3 102.5L120.0 103.0L121.1 100.9L120.8 99.0L119.4 95.9Z M112.6 104.2L111.3 106.4L118.9 107.6L119.0 104.6Z M117.1 117.5L116.5 119.4L117.6 128.0L122.2 130.9L122.6 130.7L121.2 115.8Z M109.0 126.4L110.2 127.4L116.3 127.6L115.4 120.7Z M110.9 138.1L109.7 139.4L111.6 142.8L121.3 141.8L120.0 136.0Z M119.8 151.8L122.2 150.5L121.8 143.2L121.6 142.9L111.9 143.9L112.6 150.9L114.4 152.4Z M114.6 153.4L113.4 156.7L117.0 162.7L120.1 163.6L120.7 162.8L119.6 152.8Z M116.8 163.5L109.3 170.2L111.5 171.7L120.4 169.8L119.9 164.4Z M112.4 172.6L115.3 181.3L122.5 181.5L123.4 180.9L124.6 173.0L120.8 170.9Z M122.3 182.6L114.9 182.4L112.6 184.9L110.9 189.6L122.3 189.6Z M132.1 10.8L133.5 8.4L133.4 0.8L133.3 0.6L120.1 0.6L123.4 7.5Z M118.3 19.1L131.4 21.6L131.7 21.5L133.4 19.6L132.0 12.9L118.1 16.9Z M121.8 29.0L125.1 36.2L126.3 33.5L125.1 30.2L124.6 27.1Z M127.6 45.8L133.2 47.0L133.3 46.7L128.7 39.8L127.8 37.5L125.5 38.1L124.9 38.4L124.9 38.5Z M133.1 48.8L126.9 47.5L124.1 51.1L129.9 60.6L133.2 57.9Z M123.3 51.6L123.0 51.8L119.6 60.2L128.0 63.0L128.9 62.8L129.3 61.5Z M130.4 74.1L131.3 66.3L129.0 63.6L128.3 63.8L120.7 72.8Z M130.5 75.0L120.4 73.6L120.2 73.8L119.8 76.5L128.2 85.7L133.9 79.8L134.1 79.1Z M133.2 94.6L127.9 87.8L121.6 91.3L120.4 94.4L120.2 95.3L121.6 98.2L133.0 95.3Z M132.7 104.0L132.8 96.5L121.9 99.2L122.0 100.6Z M133.7 106.9L132.8 105.2L121.8 101.6L120.8 103.6L120.5 108.9L122.6 113.9L131.5 113.8L133.4 110.7Z M122.2 115.2L123.7 130.4L126.5 130.1L131.2 114.9L122.4 115.0Z M129.7 131.2L134.4 130.4L139.1 124.9L138.3 124.2L139.1 123.6L136.3 120.0L132.1 115.2L127.4 130.4Z M121.0 135.4L122.5 142.1L122.6 142.4L130.7 140.0L129.1 132.1L126.8 131.2L123.4 131.5L122.6 131.9Z M123.2 150.6L128.4 152.3L132.9 150.9L134.3 143.4L131.2 140.8L122.8 143.3Z M122.8 151.6L120.7 152.7L121.8 162.1L128.0 161.3L127.8 153.2Z M121.4 163.3L120.7 164.2L121.2 169.9L125.4 172.2L127.4 171.1L131.3 168.0L131.0 166.4L128.5 162.3Z M131.5 183.1L135.1 181.6L127.4 172.4L126.0 173.1L124.8 180.8Z M124.1 182.0L123.4 182.6L123.4 189.3L130.7 189.3L130.8 184.3Z M150.3 5.4L150.0 4.1L134.4 1.2L134.5 8.2L146.1 9.5Z M132.7 12.4L134.2 19.4L139.7 21.4L143.3 21.7L146.8 18.6L145.8 10.3L134.3 9.0L132.8 11.6Z M138.9 22.3L134.0 20.6L132.7 22.1L132.7 22.7L132.9 23.8L138.5 25.2Z M142.7 23.3L140.7 23.1L140.3 25.6L144.2 26.5Z M139.5 58.2L138.3 54.3L134.6 48.6L134.4 48.6L134.2 48.7L134.3 57.8L139.3 58.8Z M141.6 67.1L141.8 66.3L140.3 60.9L139.4 59.8L133.8 58.6L130.1 61.7L129.6 63.0L131.9 65.9Z M141.5 68.1L132.2 66.8L131.3 74.4L134.8 78.3L142.8 73.9L143.0 73.0Z M143.2 74.9L135.0 79.3L134.8 79.9L142.8 89.3L145.2 87.8L146.4 82.5L144.8 76.8Z M128.6 86.6L128.5 86.9L134.0 94.0L141.0 92.5L142.2 90.0L134.3 80.7Z M134.2 95.0L133.9 95.9L133.8 104.6L134.5 106.0L144.6 100.7L144.8 99.5L141.1 93.5Z M148.3 106.7L144.9 101.8L134.8 107.1L134.5 110.4L137.8 110.6Z M136.8 118.8L144.0 114.6L137.7 111.9L134.3 111.6L132.7 114.3Z M135.2 130.8L138.3 134.7L143.2 133.0L142.6 128.5L139.6 125.5Z M130.4 132.2L132.0 140.0L134.8 142.3L138.3 140.3L137.5 135.5L134.3 131.5Z M135.1 143.5L133.7 151.0L139.2 153.6L144.8 142.3L144.8 142.3L139.1 141.1Z M133.2 151.7L128.9 153.0L129.2 161.8L131.4 165.5L140.0 155.5L139.1 154.5Z M132.0 167.9L139.5 170.5L143.3 167.2L144.5 160.8L142.7 157.1L140.7 156.0L131.8 166.3Z M136.4 181.3L140.3 180.5L140.4 180.4L139.1 171.4L131.8 168.8L128.4 171.6Z M136.3 182.3L132.0 184.2L131.9 189.6L139.3 189.6L140.1 181.5Z M154.0 18.6L153.8 7.9L150.8 6.1L146.7 10.1L147.6 18.3Z M144.1 22.3L146.8 27.8L155.8 21.3L155.3 20.2L154.3 19.6L147.4 19.3Z M156.1 37.7L154.1 32.4L150.0 32.1L155.7 37.8Z M146.1 87.8L148.2 88.5L148.0 88.0L146.9 84.2Z M145.7 88.6L143.1 90.2L141.9 92.9L145.5 98.8L146.9 98.2L150.6 95.8L150.4 95.3L148.5 89.5Z M148.0 98.5L152.3 100.1L150.9 96.6Z M149.5 114.9L149.7 114.7L149.1 107.9L149.0 107.8L139.7 111.2L145.8 113.8Z M145.6 115.0L137.3 119.9L139.8 123.0L148.4 115.8Z M149.6 123.4L149.1 123.6L143.6 128.6L144.1 133.0L148.4 136.5L149.4 135.9Z M139.0 135.7L139.7 140.1L144.8 141.2L147.4 137.3L143.5 134.0Z M140.8 154.0L141.3 154.5L142.9 155.4L147.9 151.5L149.3 148.0L145.6 144.4Z M144.5 157.2L145.6 159.6L153.9 159.9L155.2 157.6L149.0 153.7Z M145.9 162.0L145.0 166.6L152.6 169.9L156.7 169.4L153.8 162.3Z M151.6 171.3L143.7 168.0L140.2 171.2L141.5 180.2L145.5 181.0Z M150.1 189.4L145.8 182.3L145.5 182.1L141.2 181.2L141.1 181.3L140.3 189.4Z M162.1 7.4L162.2 7.2L163.2 0.7L151.5 0.7L151.1 3.7L151.3 5.1L154.4 6.9Z M155.7 19.2L162.5 13.2L162.0 8.5L154.7 8.1L154.9 18.8Z M147.4 28.9L147.7 29.9L148.8 31.0L154.1 31.3L158.8 26.5L156.3 22.5Z M157.4 36.5L165.3 34.5L161.7 28.0L160.1 27.9L155.8 32.3Z M146.0 99.8L145.8 100.9L149.6 106.5L149.8 106.7L154.1 104.6L152.9 101.4L147.1 99.4Z M150.9 113.7L152.8 112.1L155.8 114.3L157.5 113.0L154.6 105.7L150.4 107.8Z M164.2 121.6L163.6 117.9L160.0 119.4L158.2 114.7L157.2 115.4L157.6 115.7L152.9 120.1L152.9 120.8L161.3 124.5Z M162.3 130.8L161.1 126.3L151.7 122.2L150.8 123.0L150.5 135.8L153.8 136.5L158.3 136.1Z M151.1 146.4L152.1 146.2L152.5 138.0L150.1 137.5L149.1 138.0L146.5 142.0Z M158.3 137.1L154.2 137.5L153.7 146.8L160.1 147.7L161.0 146.5Z M151.1 148.2L149.6 152.0L156.8 156.5L159.8 154.3L159.7 148.6L153.2 147.8Z M155.2 161.2L158.3 168.6L165.3 161.8L165.6 158.9L160.4 155.3L157.2 157.5Z M161.1 177.6L160.5 175.3L157.7 171.1L152.8 171.6L146.6 181.2Z M161.1 178.6L146.8 182.2L151.3 189.6L158.2 189.6Z M174.8 5.8L172.3 0.4L168.3 0.4L164.3 0.4L163.4 7.2L173.5 7.9Z M171.4 19.9L173.0 19.8L174.8 18.6L173.2 8.8L163.1 8.1L163.0 8.3L163.5 13.2Z M160.1 25.9L162.3 26.2L170.1 20.5L163.0 14.4L156.6 20.0L157.1 21.1Z M164.0 27.3L168.0 34.5L169.0 35.2L169.8 34.9L173.5 29.0L172.2 21.6L171.6 21.7Z M166.6 45.5L168.3 36.8L167.0 35.7L157.2 38.3L157.7 39.8L162.5 44.6L163.4 46.5Z M172.6 53.5L172.5 50.1L166.8 46.6L163.9 47.5L169.1 58.0L169.6 58.0Z M172.4 113.5L172.1 114.5L165.4 117.2L166.1 121.2L171.7 120.0L171.8 119.8L173.2 116.6Z M162.0 126.0L163.2 130.7L170.4 134.2L177.2 132.4L171.8 121.1L165.7 122.4Z M169.0 140.6L169.7 135.0L163.1 131.6L159.2 136.7L161.9 146.0L164.8 145.5Z M175.2 150.0L169.2 149.0L171.2 154.8Z M166.3 158.2L170.1 156.6L167.1 147.8L165.0 146.4L161.8 147.0L160.7 148.3L160.8 154.4Z M158.7 169.9L158.7 170.3L161.2 174.1L166.1 170.5L164.9 166.4L168.0 165.5L165.8 163.0Z M162.3 175.5L162.7 177.0L170.1 179.1L171.2 176.8L168.5 178.4L166.7 172.4Z M160.1 188.8L169.9 188.8L171.4 182.9L170.1 181.6L162.5 179.5Z M174.4 1.2L175.9 4.4L182.1 3.2L182.5 1.2Z M183.0 14.4L185.6 8.5L182.9 4.9L175.6 6.3L174.3 8.4L175.9 18.3L177.8 18.3Z M175.1 28.9L182.5 32.0L188.6 29.2L177.8 19.3L175.5 19.2L173.6 20.6Z M178.7 38.3L182.0 32.6L174.9 29.7L171.2 35.7Z M170.6 36.4L169.1 36.9L167.4 45.6L173.2 49.2L180.8 45.5L178.5 39.1Z M182.5 46.4L181.4 46.1L173.6 49.9L173.7 53.5L178.5 57.2L187.4 50.3Z M180.3 62.6L178.2 57.9L173.4 54.3L170.4 58.8L171.6 62.8L173.3 66.3L173.4 67.7L178.5 65.6Z M180.7 75.2L175.3 76.0L175.6 78.9L181.2 79.3Z M180.1 90.8L188.3 86.6L184.2 85.6L184.2 81.7L182.4 81.2L174.8 80.6L175.6 87.7Z M178.2 97.4L178.9 94.8L179.3 91.7L175.8 89.3L176.7 97.9Z M182.8 107.7L185.3 105.0L178.6 98.5L176.8 99.1L176.9 100.1L174.2 108.2Z M181.7 109.4L173.7 109.8L173.6 110.2L174.8 115.3L181.5 114.7Z M182.3 116.3L174.3 117.1L173.2 119.8L184.7 122.7Z M178.1 132.3L178.9 132.5L185.1 123.8L172.6 120.6L172.5 120.7Z M178.9 133.3L177.8 133.1L170.7 135.0L170.0 140.6L175.9 144.6L179.1 138.6L178.9 133.4Z M175.6 145.5L169.6 141.4L165.8 145.9L167.6 147.1L176.0 148.5Z M177.7 162.1L184.7 152.3L177.2 150.2L171.6 156.8Z M166.6 161.8L169.5 165.0L173.3 164.0L173.7 167.5L176.3 167.9L177.6 167.3L177.1 163.0L170.8 157.5L170.8 157.5L166.9 159.1Z M176.9 169.2L174.5 174.3L174.5 174.8L174.1 175.0L171.6 180.4L173.0 181.9L178.4 182.3L181.6 181.5L182.9 173.8L178.4 168.5Z M171.4 189.6L178.2 189.6L178.0 183.4L173.0 183.1Z M183.9 4.1L186.6 7.7L189.3 7.8L189.3 0.7L184.6 0.7Z M185.0 14.2L188.8 16.1L188.8 9.7L187.0 9.6Z M179.0 18.9L189.3 28.3L189.3 18.5L183.5 15.6Z M181.7 45.3L182.5 45.5L189.6 35.5L189.6 29.8L189.4 29.8L182.9 32.8L179.3 38.8Z M188.4 49.7L189.3 50.2L189.3 37.9L183.7 45.9Z M188.8 52.0L188.2 51.7L180.0 58.0L181.4 61.2L188.8 59.1Z M181.1 63.0L179.3 65.8L185.3 70.8L186.8 71.2L189.5 68.7L189.5 71.9L189.6 71.9L189.6 60.6Z M184.0 71.2L178.6 66.7L173.6 68.8L174.1 73.4L174.4 74.2L181.5 73.2Z M182.5 74.2L183.2 80.1L184.2 80.4L184.2 73.6L185.7 72.1L185.3 72.0Z M180.9 93.9L188.8 95.3L188.8 88.3L181.1 92.2Z M179.2 97.9L186.1 104.6L189.6 104.0L189.6 97.0L179.9 95.4Z M183.7 108.4L183.4 114.9L189.3 113.6L189.3 105.2L186.3 105.6Z M186.0 123.1L189.4 123.1L189.4 114.8L183.4 116.1Z M189.4 136.3L189.4 124.2L186.0 124.2L179.9 132.8Z M180.0 138.6L189.6 149.9L189.6 137.3L179.7 133.8Z M176.5 145.3L177.0 148.8L177.3 149.3L185.3 151.6L189.2 150.7L179.7 139.5Z M189.4 162.2L189.4 151.7L185.7 152.5L178.3 162.8L178.9 167.2Z M189.6 163.2L179.5 168.0L183.8 173.2L189.6 172.4Z M189.4 186.4L189.4 173.4L184.1 174.1L182.9 181.8Z M178.9 183.3L179.1 189.6L189.6 189.6L189.6 187.7L182.2 182.5Z" fill="#e1e1e1" stroke="#666" stroke-width="0.65" stroke-linejoin="round"/><path d="M85.4 162.7L85.4 162.8L85.4 162.9L85.4 163.0L85.5 163.1L85.5 163.2L85.6 163.3L85.6 163.4L85.7 163.5L85.7 163.5L85.8 163.6L85.9 163.7L86.0 163.7L86.1 163.8L86.2 163.8L86.3 163.8L86.4 163.9L86.5 163.9L86.6 163.8L86.7 163.8L86.8 163.8L86.9 163.8L87.0 163.7L87.1 163.7L87.2 163.6L87.3 163.5L87.4 163.4L87.4 163.4L87.5 163.3L87.5 163.2L87.6 163.1L87.6 163.0L87.6 162.8L90.5 129.1L90.5 129.1L91.7 100.1L91.7 100.0L91.7 99.9L91.7 99.8L91.6 99.7L91.6 99.6L91.6 99.5L91.5 99.4L91.4 99.3L91.3 99.3L91.3 99.2L91.2 99.1L91.1 99.1L91.0 99.0L90.9 99.0L90.8 99.0L90.7 99.0L90.6 99.0L90.4 99.0L90.3 99.0L90.2 99.0L90.1 99.1L90.0 99.1L90.0 99.2L89.9 99.3L89.8 99.3L89.7 99.4L89.7 99.5L89.6 99.6L89.6 99.7L89.5 99.8L89.5 99.9L89.5 100.0L88.3 128.9Z" fill="#7ab648"/><path d="M80.4 66.4L82.8 90.5L82.8 90.5L82.8 90.6L82.8 90.7L82.9 90.7L82.9 90.8L82.9 90.8L83.0 90.9L83.0 90.9L83.0 90.9L83.1 91.0L83.2 91.0L83.2 91.0L83.3 91.0L83.3 91.0L83.4 91.0L83.4 91.0L83.5 91.0L83.6 91.0L83.6 91.0L83.7 91.0L83.7 90.9L83.8 90.9L83.8 90.9L83.8 90.8L83.9 90.8L83.9 90.7L83.9 90.7L84.0 90.6L84.0 90.5L84.0 90.5L84.0 90.4L84.0 90.4L81.6 66.3L81.6 66.2L75.8 37.3L75.8 37.2L66.6 8.3L66.6 8.2L66.5 8.2L66.5 8.1L66.5 8.1L66.4 8.0L66.4 8.0L66.4 8.0L66.3 7.9L66.2 7.9L66.2 7.9L66.1 7.9L66.1 7.9L66.0 7.9L66.0 7.9L65.9 7.9L65.8 7.9L65.8 7.9L65.7 7.9L65.7 8.0L65.6 8.0L65.6 8.0L65.6 8.1L65.5 8.1L65.5 8.2L65.5 8.2L65.4 8.3L65.4 8.4L65.4 8.4L65.4 8.5L65.4 8.5L65.4 8.6L65.5 8.6L74.6 37.5Z" fill="#7ab648"/><path d="M76.3 55.0L81.7 83.6L83.4 109.7L81.0 143.2L76.9 190.0L83.2 190.0L87.2 143.7L87.2 143.7L89.6 109.9L89.6 109.5L87.9 83.0L87.9 82.6L82.3 53.7L82.3 53.4L73.8 24.5L73.7 24.1L62.7 0.0L56.2 0.0L56.0 0.1L67.9 26.4Z" fill="#90d2f6" stroke="#4a7fe0" stroke-width="0.5"/><path d="M45.5 88.0L32.3 109.7L27.5 129.0L33.5 162.8L32.3 186.9" fill="none" stroke="#4a6fe0" stroke-width="0.7"/></svg>
<div class="a" style="left:1153.5px;top:240.3px;width:201.5px;height:1.3px;background:rgba(245,60,60,0.8);"></div>
<div class="a" style="left:1234.3px;top:124.5px;width:1.3px;height:201px;background:rgba(245,60,60,0.8);"></div>
<div class="a" style="left:1229.6px;top:237.4px;width:11.8px;height:6.4px;background:#f08080;border:1.9px solid #f00000;border-radius:1.5px;"></div>
<div class="a" style="left:1153px;top:308px;width:17.5px;height:18px;background:#fff;border:1px solid #c4c4c4;"></div>
<svg class="a" style="left:1156px;top:311px;" width="11" height="11" viewBox="0 0 11 11"><path d="M1 2.2H8.8V10" fill="none" stroke="#777" stroke-width="2.4"/></svg>
<div class="a" style="left:300px;top:119px;width:33px;height:39px;background:#fff;border-right:1px solid #d0d0d0;border-bottom:1px solid #d0d0d0;"></div>
<svg class="a" style="left:313px;top:131px;" width="11" height="15" viewBox="0 0 11 15"><path d="M9 1.6L2.4 7.5L9 13.4" fill="none" stroke="#666" stroke-width="2.6"/></svg>
<div class="a" style="left:339px;top:124px;width:115px;height:34px;background:rgba(255,255,255,0.6);border:1px solid #c9c9c9;"></div>
<span id="t50" class="a t" style="left:345.6px;top:130.14px;font:400 12px/20px 'Liberation Sans', sans-serif;color:#444;letter-spacing:-0.256px;">Ich will ...</span>
<div class="a" style="left:396px;top:130px;width:40px;height:22px;background:#fff;border:1px solid #b5b5b5;"></div>
<div class="a" style="left:305px;top:163.5px;width:28px;height:232px;background:#fff;border:1px solid #d0d0d0;"></div>
<div class="a" style="left:306px;top:368px;width:26px;height:1px;background:#d0d0d0;"></div>
<svg class="a" style="left:309px;top:167.5px;" width="20" height="20" viewBox="0 0 20 20"><path d="M6.7 4.9A7 7 0 1 0 15.9 6.6" fill="none" stroke="#3c7ac0" stroke-width="2.2"/><path d="M11 2.4L17.9 3.9L12.2 9.3Z" fill="#3c7ac0"/></svg>
<svg class="a" style="left:309px;top:191.5px;" width="20" height="20" viewBox="0 0 20 20"><g fill="none" stroke="#3c7ac0" stroke-width="1.15"><circle cx="10" cy="10" r="7.6"/><ellipse cx="10" cy="10" rx="3.6" ry="7.6"/><path d="M2.4 10H17.6M3.6 6.2H16.4M3.6 13.8H16.4"/></g></svg>
<svg class="a" style="left:309px;top:215px;" width="20" height="20" viewBox="0 0 20 20"><path d="M7.6 12.6L2.2 17.6" stroke="#6e6e6e" stroke-width="2.4" stroke-linecap="round"/><circle cx="11.6" cy="8" r="5.6" fill="#fff" stroke="#6e6e6e" stroke-width="1.1"/><path d="M8.8 8H14.4M11.6 5.2V10.8" stroke="#3c7ac0" stroke-width="1.4"/></svg>
<svg class="a" style="left:309px;top:239px;" width="20" height="20" viewBox="0 0 20 20"><path d="M7.6 12.6L2.2 17.6" stroke="#6e6e6e" stroke-width="2.4" stroke-linecap="round"/><circle cx="11.6" cy="8" r="5.6" fill="#fff" stroke="#6e6e6e" stroke-width="1.1"/><path d="M8.8 8H14.4" stroke="#3c7ac0" stroke-width="1.4"/></svg>
<svg class="a" style="left:309px;top:263px;" width="20" height="20" viewBox="0 0 20 20"><path d="M7.6 12.6L2.2 17.6" stroke="#6e6e6e" stroke-width="2.4" stroke-linecap="round"/><circle cx="11.6" cy="8" r="5.6" fill="#fff" stroke="#6e6e6e" stroke-width="1.1"/><path d="M13.4 5.2V10.8L9.4 8Z" fill="#3c7ac0"/></svg>
<svg class="a" style="left:309px;top:287px;" width="20" height="20" viewBox="0 0 20 20"><path d="M7.6 12.6L2.2 17.6" stroke="#6e6e6e" stroke-width="2.4" stroke-linecap="round"/><circle cx="11.6" cy="8" r="5.6" fill="#fff" stroke="#6e6e6e" stroke-width="1.1"/><path d="M10 5.2V10.8L14 8Z" fill="#3c7ac0"/></svg>
<svg class="a" style="left:309px;top:314px;" width="20" height="20" viewBox="0 0 20 20"><circle cx="10" cy="10" r="7" fill="#fff" stroke="#3c7ac0" stroke-width="1.3"/><circle cx="10" cy="10" r="3.1" fill="#3c7ac0"/></svg>
<svg class="a" style="left:309px;top:340px;" width="20" height="20" viewBox="0 0 20 20"><rect x="5.5" y="5.5" width="9" height="9" fill="#c9c9c9"/><g stroke="#3c7ac0" stroke-width="1.7" fill="none"><path d="M2.6 2.6L17.4 17.4M17.4 2.6L2.6 17.4"/><path d="M2.2 6.6V2.2H6.6M13.4 2.2H17.8V6.6M17.8 13.4V17.8H13.4M6.6 17.8H2.2V13.4"/></g></svg>
<svg class="a" style="left:312px;top:376.5px;" width="14" height="10" viewBox="0 0 14 10"><path d="M1.6 8L7 2.6L12.4 8" fill="none" stroke="#666" stroke-width="2.6"/></svg>
<div class="a" style="left:591px;top:641px;width:768px;height:1px;background:#d0d0d0;"></div>
<span id="t51" class="a t" style="left:312.3px;top:623.14px;font:400 12px/20px 'Liberation Sans', sans-serif;color:#444;letter-spacing:-0.250px;transform:scaleX(0.8782);transform-origin:0 50%;">OBJEKTÜBERSICHT</span>
<svg class="a" style="left:427px;top:626.5px;" width="12" height="12" viewBox="0 0 12 12"><circle cx="6" cy="6" r="5.6" fill="#9b9b9b"/><path d="M3.7 3.7L8.3 8.3M8.3 3.7L3.7 8.3" stroke="#fff" stroke-width="1.6"/></svg>
<span id="t52" class="a t" style="left:456.5px;top:623.14px;font:400 12px/20px 'Liberation Sans', sans-serif;color:#1e7bc4;letter-spacing:-0.250px;transform:scaleX(0.9038);transform-origin:0 50%;">THEMENERGEBNIS</span>
<svg class="a" style="left:570.8px;top:626.5px;" width="12" height="12" viewBox="0 0 12 12"><circle cx="6" cy="6" r="5.6" fill="#9b9b9b"/><path d="M3.7 3.7L8.3 8.3M8.3 3.7L3.7 8.3" stroke="#fff" stroke-width="1.6"/></svg>
<span id="t53" class="a t" style="left:1156px;top:621.84px;font:400 12px/20px 'Liberation Sans', sans-serif;color:#444;letter-spacing:-0.041px;">3 von 3 Objekten ausgewählt</span>
<svg class="a" style="left:1335px;top:627px;" width="14" height="10" viewBox="0 0 14 10"><path d="M1.6 2L7 7.4L12.4 2" fill="none" stroke="#555" stroke-width="2.6"/></svg>
<span id="t54" class="a t" style="left:310.3px;top:643.34px;font:400 12px/20px 'Liberation Sans', sans-serif;color:#444;letter-spacing:-0.142px;">Ergebnisliste von Grundstücke</span>
<div class="a" style="left:1343px;top:642px;width:16px;height:21px;background:#efefef;"></div>
<div class="a" style="left:1343px;top:685px;width:16px;height:114.5px;background:#fafafa;"></div>
<div class="a" style="left:300px;top:662px;width:1043px;height:23px;background:#efefef;"></div>
<span id="t55" class="a t" style="left:362.3px;top:665.04px;font:400 12px/20px 'Liberation Sans', sans-serif;color:#444;letter-spacing:-0.083px;">Grundstücksnummer</span>
<span id="t56" class="a t" style="left:519.3px;top:665.04px;font:400 12px/20px 'Liberation Sans', sans-serif;color:#444;letter-spacing:-0.135px;">KG-Nummer</span>
<span id="t57" class="a t" style="left:660.4px;top:665.04px;font:400 12px/20px 'Liberation Sans', sans-serif;color:#444;letter-spacing:-0.376px;">KG-Name</span>
<span id="t58" class="a t" style="left:794.7px;top:665.04px;font:400 12px/20px 'Liberation Sans', sans-serif;color:#444;letter-spacing:-0.624px;">Fläche</span>
<span id="t59" class="a t" style="left:880.3px;top:665.04px;font:400 12px/20px 'Liberation Sans', sans-serif;color:#444;letter-spacing:-0.078px;">Umfang</span>
<span id="t60" class="a t" style="left:999.2px;top:665.04px;font:400 12px/20px 'Liberation Sans', sans-serif;color:#444;letter-spacing:-0.218px;">Typ</span>
<span id="t61" class="a t" style="left:1119.7px;top:665.04px;font:400 12px/20px 'Liberation Sans', sans-serif;color:#444;letter-spacing:-0.356px;">KG-Gnr.</span>
<span id="t62" class="a t" style="left:1239px;top:665.04px;font:400 12px/20px 'Liberation Sans', sans-serif;color:#444;letter-spacing:0.045px;">Qualität</span>
<svg class="a" style="left:481.5px;top:672px;" width="8" height="5" viewBox="0 0 8 5"><path d="M0 4.6H8L4 0.4Z" fill="#222"/></svg>
<div class="a" style="left:300px;top:685px;width:1043px;height:23px;background:#c2d7ec;"></div>
<div class="a" style="left:300px;top:707px;width:1043px;height:1px;background:#d6dde6;"></div>
<svg class="a" style="left:302px;top:687.9px;" width="16" height="16" viewBox="0 0 16 16"><g fill="none" stroke="#d8452c"><circle cx="8" cy="8" r="6.9" stroke-width="2.1"/><circle cx="8" cy="8" r="3.4" stroke-width="1.3"/></g><circle cx="8" cy="8" r="1.3" fill="#d8452c"/></svg>
<svg class="a" style="left:321.7px;top:694.5px;" width="7.4" height="4.2" viewBox="0 0 7.4 4.2"><path d="M0 0H7.4L3.7 4.2Z" fill="#111"/></svg>
<span id="t63" class="a t" style="left:339.8px;top:688.14px;font:400 12px/20px 'Liberation Sans', sans-serif;color:#444;letter-spacing:-0.212px;">390</span>
<span id="t64" class="a t" style="left:502.3px;top:688.14px;font:400 12px/20px 'Liberation Sans', sans-serif;color:#444;letter-spacing:-0.083px;">63105</span>
<span id="t65" class="a t" style="left:609.8px;top:688.14px;font:400 12px/20px 'Liberation Sans', sans-serif;color:#444;letter-spacing:-0.594px;">Gries</span>
<span id="t66" class="a t" style="left:792.0px;top:688.14px;font:400 12px/20px 'Liberation Sans', sans-serif;color:#444;letter-spacing:-0.337px;">526,453037</span>
<span id="t67" class="a t" style="left:888.6999999999999px;top:688.14px;font:400 12px/20px 'Liberation Sans', sans-serif;color:#444;letter-spacing:-0.369px;">92,009373</span>
<span id="t68" class="a t" style="left:1061px;top:688.14px;font:400 12px/20px 'Liberation Sans', sans-serif;color:#444;">1</span>
<span id="t69" class="a t" style="left:1074.7px;top:688.14px;font:400 12px/20px 'Liberation Sans', sans-serif;color:#444;letter-spacing:-0.292px;">63105390</span>
<span id="t70" class="a t" style="left:1214.4px;top:688.14px;font:400 12px/20px 'Liberation Sans', sans-serif;color:#444;letter-spacing:-0.250px;transform:scaleX(0.8166);transform-origin:0 50%;">BEV</span>
<span id="t71" class="a t" style="left:1314px;top:688.14px;font:400 12px/20px 'Liberation Sans', sans-serif;color:#444;letter-spacing:-0.340px;width:29.00px;overflow:hidden;">01.04</span>
<div class="a" style="left:300px;top:708px;width:1043px;height:23px;background:#c2d7ec;"></div>
<div class="a" style="left:300px;top:730px;width:1043px;height:1px;background:#d6dde6;"></div>
<svg class="a" style="left:302px;top:710.9px;" width="16" height="16" viewBox="0 0 16 16"><g fill="none" stroke="#d8452c"><circle cx="8" cy="8" r="6.9" stroke-width="2.1"/><circle cx="8" cy="8" r="3.4" stroke-width="1.3"/></g><circle cx="8" cy="8" r="1.3" fill="#d8452c"/></svg>
<svg class="a" style="left:321.7px;top:717.5px;" width="7.4" height="4.2" viewBox="0 0 7.4 4.2"><path d="M0 0H7.4L3.7 4.2Z" fill="#111"/></svg>
<span id="t72" class="a t" style="left:339.8px;top:711.14px;font:400 12px/20px 'Liberation Sans', sans-serif;color:#444;letter-spacing:-0.212px;">391</span>
<span id="t73" class="a t" style="left:502.3px;top:711.14px;font:400 12px/20px 'Liberation Sans', sans-serif;color:#444;letter-spacing:-0.083px;">63105</span>
<span id="t74" class="a t" style="left:609.8px;top:711.14px;font:400 12px/20px 'Liberation Sans', sans-serif;color:#444;letter-spacing:-0.594px;">Gries</span>
<span id="t75" class="a t" style="left:792.0px;top:711.14px;font:400 12px/20px 'Liberation Sans', sans-serif;color:#444;letter-spacing:-0.337px;">576,964362</span>
<span id="t76" class="a t" style="left:888.6999999999999px;top:711.14px;font:400 12px/20px 'Liberation Sans', sans-serif;color:#444;letter-spacing:-0.369px;">96,548967</span>
<span id="t77" class="a t" style="left:1061px;top:711.14px;font:400 12px/20px 'Liberation Sans', sans-serif;color:#444;">1</span>
<span id="t78" class="a t" style="left:1074.7px;top:711.14px;font:400 12px/20px 'Liberation Sans', sans-serif;color:#444;letter-spacing:-0.292px;">63105391</span>
<span id="t79" class="a t" style="left:1214.4px;top:711.14px;font:400 12px/20px 'Liberation Sans', sans-serif;color:#444;letter-spacing:-0.250px;transform:scaleX(0.8166);transform-origin:0 50%;">BEV</span>
<span id="t80" class="a t" style="left:1314px;top:711.14px;font:400 12px/20px 'Liberation Sans', sans-serif;color:#444;letter-spacing:-0.340px;width:29.00px;overflow:hidden;">01.04</span>
<div class="a" style="left:300px;top:731px;width:1043px;height:23px;background:#c2d7ec;"></div>
<div class="a" style="left:300px;top:753px;width:1043px;height:1px;background:#d6dde6;"></div>
<svg class="a" style="left:302px;top:733.9px;" width="16" height="16" viewBox="0 0 16 16"><g fill="none" stroke="#d8452c"><circle cx="8" cy="8" r="6.9" stroke-width="2.1"/><circle cx="8" cy="8" r="3.4" stroke-width="1.3"/></g><circle cx="8" cy="8" r="1.3" fill="#d8452c"/></svg>
<svg class="a" style="left:321.7px;top:740.5px;" width="7.4" height="4.2" viewBox="0 0 7.4 4.2"><path d="M0 0H7.4L3.7 4.2Z" fill="#111"/></svg>
<span id="t81" class="a t" style="left:339.8px;top:734.14px;font:400 12px/20px 'Liberation Sans', sans-serif;color:#444;letter-spacing:-0.212px;">398</span>
<span id="t82" class="a t" style="left:502.3px;top:734.14px;font:400 12px/20px 'Liberation Sans', sans-serif;color:#444;letter-spacing:-0.083px;">63105</span>
<span id="t83" class="a t" style="left:609.8px;top:734.14px;font:400 12px/20px 'Liberation Sans', sans-serif;color:#444;letter-spacing:-0.594px;">Gries</span>
<span id="t84" class="a t" style="left:786.2px;top:734.14px;font:400 12px/20px 'Liberation Sans', sans-serif;color:#444;letter-spacing:-0.388px;">1618,579518</span>
<span id="t85" class="a t" style="left:882.9px;top:734.14px;font:400 12px/20px 'Liberation Sans', sans-serif;color:#444;letter-spacing:-0.422px;">168,525213</span>
<span id="t86" class="a t" style="left:1061px;top:734.14px;font:400 12px/20px 'Liberation Sans', sans-serif;color:#444;">1</span>
<span id="t87" class="a t" style="left:1074.7px;top:734.14px;font:400 12px/20px 'Liberation Sans', sans-serif;color:#444;letter-spacing:-0.292px;">63105398</span>
<span id="t88" class="a t" style="left:1214.4px;top:734.14px;font:400 12px/20px 'Liberation Sans', sans-serif;color:#444;letter-spacing:-0.250px;transform:scaleX(0.8166);transform-origin:0 50%;">BEV</span>
<span id="t89" class="a t" style="left:1314px;top:734.14px;font:400 12px/20px 'Liberation Sans', sans-serif;color:#444;letter-spacing:-0.340px;width:29.00px;overflow:hidden;">01.04</span>
<div class="a" style="left:336px;top:662px;width:1px;height:92px;background:#d9d9d9;"></div>
<div class="a" style="left:499px;top:662px;width:1px;height:92px;background:#d9d9d9;"></div>
<div class="a" style="left:606px;top:662px;width:1px;height:92px;background:#d9d9d9;"></div>
<div class="a" style="left:766px;top:662px;width:1px;height:92px;background:#d9d9d9;"></div>
<div class="a" style="left:856px;top:662px;width:1px;height:92px;background:#d9d9d9;"></div>
<div class="a" style="left:946px;top:662px;width:1px;height:92px;background:#d9d9d9;"></div>
<div class="a" style="left:1072px;top:662px;width:1px;height:92px;background:#d9d9d9;"></div>
<div class="a" style="left:1210px;top:662px;width:1px;height:92px;background:#d9d9d9;"></div>
<div class="a" style="left:1310px;top:662px;width:1px;height:92px;background:#d9d9d9;"></div>
<div class="a" style="left:300px;top:799.5px;width:1043px;height:15.5px;background:#f0f0f0;"></div>
<div class="a" style="left:334px;top:799.5px;width:725px;height:15.5px;background:#cdcdcd;"></div>
<svg class="a" style="left:316px;top:802px;" width="9" height="11" viewBox="0 0 9 11"><path d="M7.4 1.2L2.2 5.5L7.4 9.8" fill="none" stroke="#444" stroke-width="2.2"/></svg>
<svg class="a" style="left:1316.5px;top:802px;" width="9" height="11" viewBox="0 0 9 11"><path d="M1.6 1.2L6.8 5.5L1.6 9.8" fill="none" stroke="#444" stroke-width="2.2"/></svg>
<svg class="a" style="left:1344.5px;top:701px;" width="13" height="9" viewBox="0 0 13 9"><path d="M1.4 7.6L6.5 2.2L11.6 7.6" fill="none" stroke="#d0d0d0" stroke-width="2"/></svg>
<svg class="a" style="left:1344.5px;top:772px;" width="13" height="9" viewBox="0 0 13 9"><path d="M1.4 1.4L6.5 6.8L11.6 1.4" fill="none" stroke="#d0d0d0" stroke-width="2"/></svg>
<div class="a" style="left:0px;top:815px;width:1359px;height:1px;background:#c8c8c8;"></div>
<svg class="a" style="left:305px;top:822px;" width="16" height="16" viewBox="0 0 16 16"><rect x="0.5" y="0.5" width="12" height="10" fill="#fff" stroke="#666" stroke-width="0.9"/><rect x="0.5" y="0.5" width="12" height="3" fill="#3c7ac0"/><path d="M4.5 0.5V10.5M8.5 0.5V10.5M0.5 7H12.5" stroke="#888" stroke-width="0.7"/><circle cx="9.8" cy="9.6" r="3.7" fill="#fff" stroke="#555" stroke-width="1.3"/><path d="M12.4 12.4L15.4 15.6" stroke="#444" stroke-width="2"/></svg>
<svg class="a" style="left:334px;top:822px;" width="16" height="16" viewBox="0 0 16 16"><rect x="0" y="0.5" width="16" height="15" fill="#f5b45c"/><rect x="0" y="0.5" width="16" height="3.4" fill="#3c7ac0"/><path d="M5.3 0.5V15.5M10.6 0.5V15.5M0 7.8H16M0 11.7H16" stroke="#c8862c" stroke-width="0.8"/></svg>
<svg class="a" style="left:362.5px;top:822px;" width="17" height="17" viewBox="0 0 17 17"><rect x="0" y="0" width="12" height="10.5" fill="#f5b45c"/><rect x="0" y="0" width="12" height="3" fill="#3c7ac0"/><path d="M4 0V10.5M8 0V10.5M0 6.6H12" stroke="#c8862c" stroke-width="0.7"/><rect x="6.5" y="6.5" width="10" height="9.5" fill="#fff" stroke="#777" stroke-width="0.9"/><path d="M7.6 14.8L10.6 11.4L12.6 13.4L13.8 12.4L15.6 14.8Z" fill="#4aa564"/><circle cx="13.6" cy="9.4" r="1" fill="#f5b45c"/></svg>
<svg class="a" style="left:391px;top:822px;" width="16" height="16" viewBox="0 0 16 16"><path d="M15 8H2.6M8.2 2.2L2.4 8L8.2 13.8" fill="none" stroke="#3c7ac0" stroke-width="2.6"/></svg>
<svg class="a" style="left:420px;top:822px;" width="16" height="16" viewBox="0 0 16 16"><path d="M5.4 10.8L1.2 15" stroke="#777" stroke-width="2.2" stroke-linecap="round"/><circle cx="9.4" cy="6.4" r="5.2" fill="#fff" stroke="#777" stroke-width="1.1"/><path d="M10.8 4V8.8L7.4 6.4Z" fill="#3c7ac0"/></svg>
<svg class="a" style="left:449px;top:822px;" width="16" height="16" viewBox="0 0 16 16"><path d="M5.4 10.8L1.2 15" stroke="#777" stroke-width="2.2" stroke-linecap="round"/><circle cx="9.4" cy="6.4" r="5.2" fill="#fff" stroke="#777" stroke-width="1.1"/><path d="M8.2 4V8.8L11.6 6.4Z" fill="#3c7ac0"/></svg>
<svg class="a" style="left:478px;top:822px;" width="16" height="16" viewBox="0 0 16 16"><path d="M1 8H13.4M7.8 2.2L13.6 8L7.8 13.8" fill="none" stroke="#3c7ac0" stroke-width="2.6"/></svg>
<svg class="a" style="left:507px;top:822px;" width="16" height="16" viewBox="0 0 16 16"><rect x="0.8" y="0.8" width="14.4" height="14.4" fill="#fff" stroke="#444" stroke-width="1.1" stroke-dasharray="2 1.6"/><path d="M5 5L11 11M11 5L5 11" stroke="#d4321f" stroke-width="2"/></svg>
<svg class="a" style="left:535.5px;top:822px;" width="17" height="17" viewBox="0 0 17 17"><path d="M5.5 0.5H12L16 4.5V15.5H5.5Z" fill="#fff" stroke="#666" stroke-width="0.9"/><path d="M12 0.5V4.5H16" fill="none" stroke="#666" stroke-width="0.9"/><rect x="0.5" y="6" width="9.5" height="9.5" fill="#2f9a5a"/><path d="M2.8 8.2L7.6 13.4M7.6 8.2L2.8 13.4" stroke="#fff" stroke-width="1.5"/></svg>
<svg class="a" style="left:562px;top:822px;" width="16" height="16" viewBox="0 0 16 16"><path d="M3.4 0.8H15.8L12.8 4.2H0.6Z" fill="#f5b45c"/><path d="M3.4 11.6H15.8L12.8 15.4H0.6Z" fill="#3c7ac0"/><path d="M3 4.4V12M7 4.4V12M11 4.4V12M14.6 2.6V11" stroke="#d4321f" stroke-width="0.9" stroke-dasharray="1 1"/></svg>
<svg class="a" style="left:585.8px;top:827.0px;" width="7" height="4" viewBox="0 0 7 4"><path d="M0 0H7L3.5 4Z" fill="#111"/></svg>
<svg class="a" style="left:609px;top:822px;" width="16" height="16" viewBox="0 0 16 16"><path d="M0 0H16V16H2.2L0 13.8Z" fill="#3c7ac0"/><rect x="2.6" y="1.4" width="10.8" height="6.6" fill="#fff"/><path d="M3.8 3.2H12.2M3.8 5.2H12.2" stroke="#999" stroke-width="0.8"/><rect x="4.2" y="10.2" width="8.2" height="5.8" fill="#fff"/><rect x="5.4" y="11.2" width="2.4" height="4.8" fill="#666"/></svg>
</div></body></html>
